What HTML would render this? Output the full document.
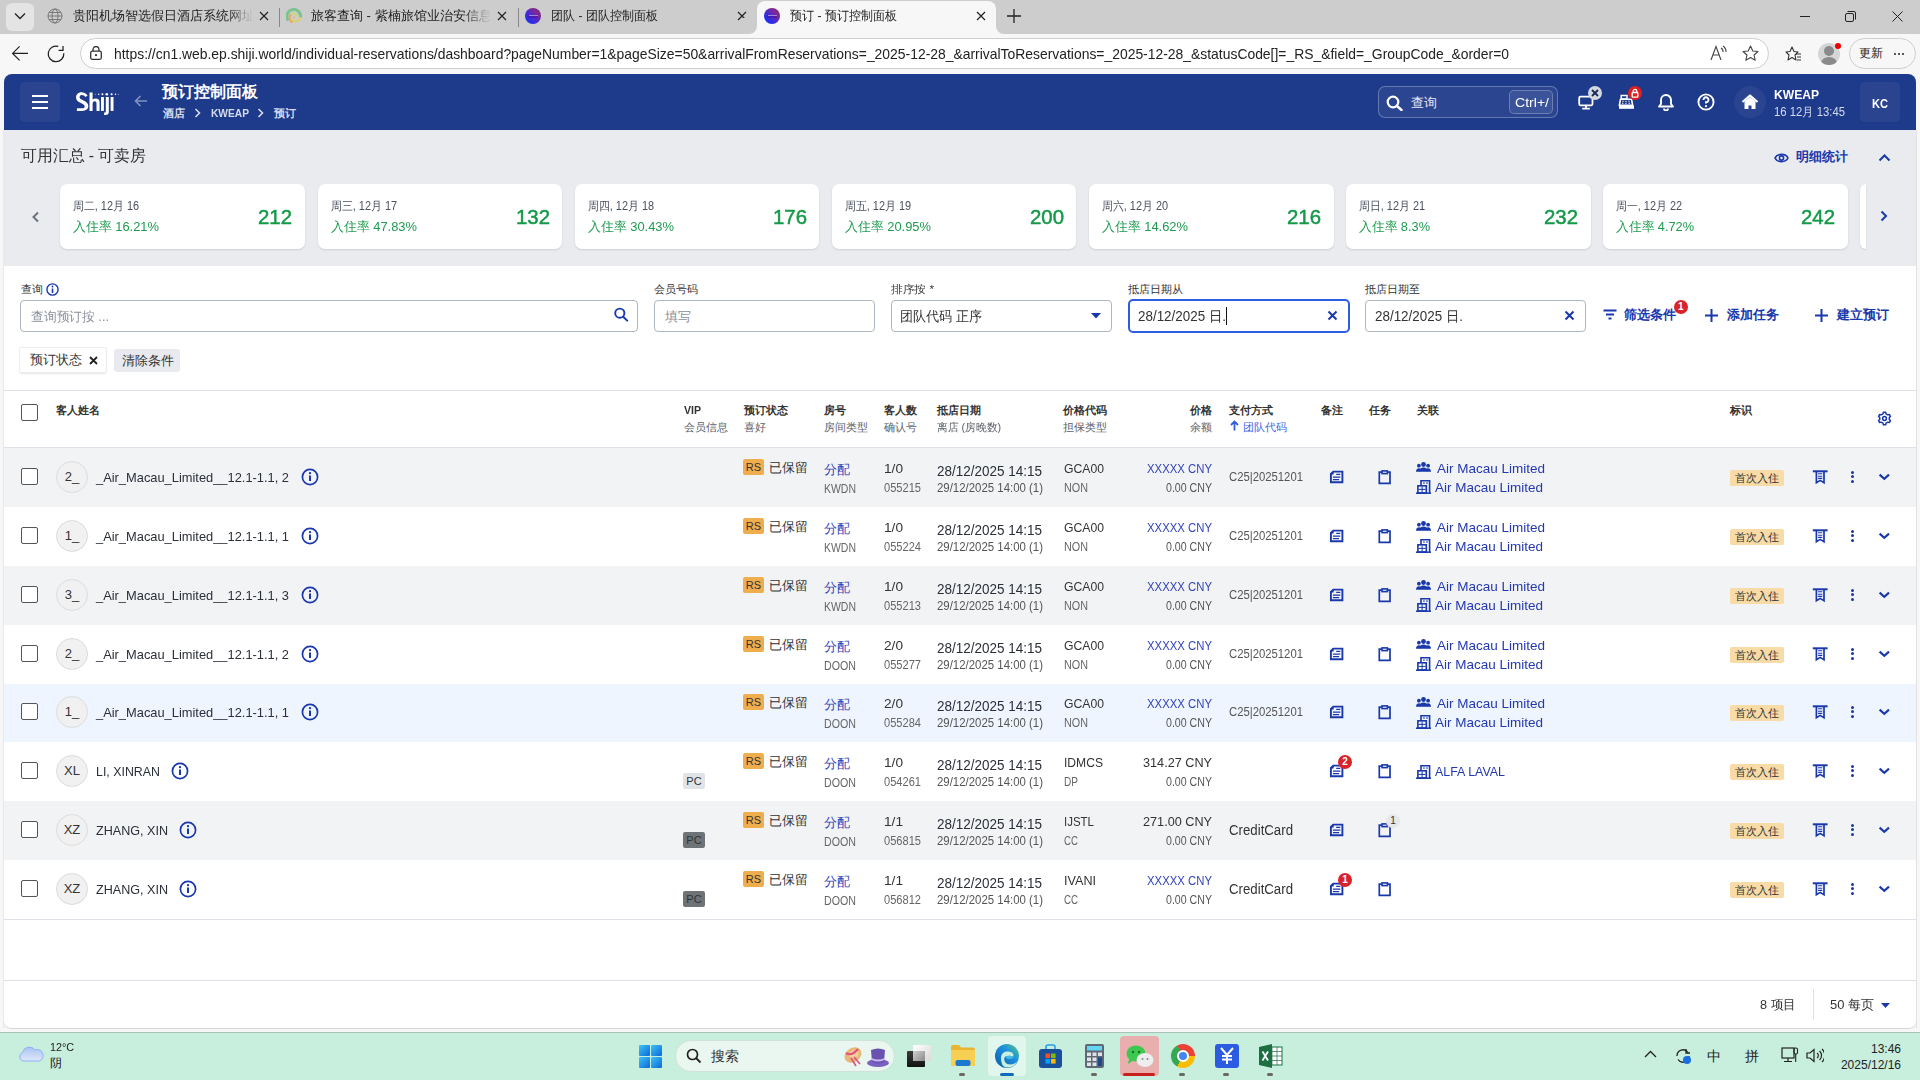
<!DOCTYPE html><html><head><meta charset="utf-8"><style>
html,body{margin:0;padding:0;width:1920px;height:1080px;overflow:hidden;background:#f7f7f7;font-family:"Liberation Sans", sans-serif;}
.t{position:absolute;white-space:nowrap;}
.r{position:absolute;}
</style></head><body>
<div class="r" style="left:0px;top:0px;width:1920px;height:34px;background:#cdcdcd;"></div>
<div class="r" style="left:6px;top:3px;width:28px;height:28px;background:#e4e4e4;border-radius:6px"></div>
<svg class="r" style="left:14px;top:12px;" width="12" height="8" viewBox="0 0 12 8"><path d="M1 1.5 L6 6.5 L11 1.5" fill="none" stroke="#222" stroke-width="1.3"/></svg>
<svg class="r" style="left:47px;top:8px;" width="16" height="16" viewBox="0 0 16 16"><circle cx="8" cy="8" r="7" fill="none" stroke="#777" stroke-width="1"/><ellipse cx="8" cy="8" rx="3" ry="7" fill="none" stroke="#777" stroke-width="1"/><path d="M1 8H15M2 4.5H14M2 11.5H14" stroke="#777" stroke-width="1"/></svg>
<div class="t" style="left:73px;top:9px;font-size:13px;line-height:13px;color:#222;font-weight:normal;width:180px;overflow:hidden;-webkit-mask-image:linear-gradient(90deg,#000 85%,transparent)">贵阳机场智选假日酒店系统网址导</div>
<svg class="r" style="left:259px;top:11px;" width="10" height="10" viewBox="0 0 10 10"><path d="M1 1L9 9M9 1L1 9" stroke="#222" stroke-width="1.2"/></svg>
<div class="r" style="left:279px;top:8px;width:1px;height:19px;background:#888;"></div>
<svg class="r" style="left:286px;top:8px;" width="16" height="16" viewBox="0 0 16 16"><path d="M2.5 12.5A6.8 6.8 0 1 1 14.5 9.5" fill="none" stroke="#7cc48e" stroke-width="3"/><path d="M14.5 9.5A5.5 5.5 0 0 1 6 12" fill="none" stroke="#d8d070" stroke-width="2.4"/><path d="M6.5 14.5A5 5 0 0 1 5 6.5" fill="none" stroke="#e8a860" stroke-width="2.2"/><path d="M5 6.5A4.5 4.5 0 0 1 12 9" fill="none" stroke="#c8d878" stroke-width="2"/><circle cx="8" cy="9.5" r="1" fill="#e8b070"/></svg>
<div class="t" style="left:311px;top:9px;font-size:13px;line-height:13px;color:#222;font-weight:normal;width:180px;overflow:hidden;-webkit-mask-image:linear-gradient(90deg,#000 85%,transparent)">旅客查询 - 紫楠旅馆业治安信息管</div>
<svg class="r" style="left:497px;top:11px;" width="10" height="10" viewBox="0 0 10 10"><path d="M1 1L9 9M9 1L1 9" stroke="#222" stroke-width="1.2"/></svg>
<div class="r" style="left:518px;top:8px;width:1px;height:19px;background:#888;"></div>
<div class="r" style="left:525px;top:8px;width:16px;height:16px;border-radius:50%;background:linear-gradient(45deg,#0a30ff 5%,#4a2ad0 45%,#84288c 75%,#6a2070)"></div>
<div class="r" style="left:528px;top:14.5px;width:10px;height:3px;background:rgba(60,10,120,0.35);"></div>
<div class="r" style="left:528.5px;top:15.4px;width:9px;height:1px;background:rgba(220,200,255,0.6);"></div>
<div class="t" style="left:551px;top:9px;font-size:13px;line-height:13px;color:#222;font-weight:normal;transform:scaleX(0.9259);transform-origin:0 0;">团队 - 团队控制面板</div>
<svg class="r" style="left:737px;top:11px;" width="10" height="10" viewBox="0 0 10 10"><path d="M1 1L9 9M9 1L1 9" stroke="#222" stroke-width="1.2"/></svg>
<div class="r" style="left:749px;top:26px;width:8px;height:8px;background:#f7f7f7;"></div>
<div class="r" style="left:741px;top:18px;width:16px;height:16px;background:#cdcdcd;border-radius:0 0 8px 0"></div>
<div class="r" style="left:996px;top:26px;width:8px;height:8px;background:#f7f7f7;"></div>
<div class="r" style="left:996px;top:18px;width:16px;height:16px;background:#cdcdcd;border-radius:0 0 0 8px"></div>
<div class="r" style="left:757px;top:1px;width:239px;height:34px;background:#f7f7f7;border-radius:8px 8px 0 0"></div>
<div class="r" style="left:764px;top:8px;width:16px;height:16px;border-radius:50%;background:linear-gradient(45deg,#0a30ff 5%,#4a2ad0 45%,#84288c 75%,#6a2070)"></div>
<div class="r" style="left:767px;top:14.5px;width:10px;height:3px;background:rgba(60,10,120,0.35);"></div>
<div class="r" style="left:767.5px;top:15.4px;width:9px;height:1px;background:rgba(220,200,255,0.6);"></div>
<div class="t" style="left:790px;top:9px;font-size:13px;line-height:13px;color:#222;font-weight:normal;transform:scaleX(0.9259);transform-origin:0 0;">预订 - 预订控制面板</div>
<svg class="r" style="left:976px;top:11px;" width="10" height="10" viewBox="0 0 10 10"><path d="M1 1L9 9M9 1L1 9" stroke="#222" stroke-width="1.2"/></svg>
<svg class="r" style="left:1007px;top:9px;" width="14" height="14" viewBox="0 0 14 14"><path d="M7 0V14M0 7H14" stroke="#222" stroke-width="1.3"/></svg>
<div class="r" style="left:1800px;top:16px;width:10px;height:1px;background:#222;"></div>
<svg class="r" style="left:1845px;top:11px;" width="11" height="11" viewBox="0 0 11 11"><rect x="0.5" y="2.5" width="8" height="8" rx="1.5" fill="none" stroke="#222" stroke-width="1"/><path d="M2.5 0.5H9A1.5 1.5 0 0 1 10.5 2V8.5" fill="none" stroke="#222" stroke-width="1"/></svg>
<svg class="r" style="left:1892px;top:11px;" width="11" height="11" viewBox="0 0 11 11"><path d="M0.5 0.5L10.5 10.5M10.5 0.5L0.5 10.5" stroke="#222" stroke-width="1"/></svg>
<svg class="r" style="left:11px;top:45px;" width="18" height="17" viewBox="0 0 18 17"><path d="M17 8.4H1.6M8.6 1.4L1.6 8.4L8.6 15.4" fill="none" stroke="#222" stroke-width="1.2"/></svg>
<svg class="r" style="left:46px;top:44px;" width="20" height="20" viewBox="0 0 20 20"><path d="M12.3 2.4A7.8 7.8 0 1 0 17.8 9.2" fill="none" stroke="#222" stroke-width="1.25"/><path d="M12.6 6.3H17V1.9" fill="none" stroke="#222" stroke-width="1.25"/></svg>
<div class="r" style="left:80px;top:38px;width:1687px;height:29px;background:#fff;border:1px solid #cfcfcf;border-radius:16px"></div>
<svg class="r" style="left:90px;top:46px;" width="12" height="14" viewBox="0 0 12 14"><rect x="0.7" y="5.2" width="10.6" height="8.1" rx="1.5" fill="none" stroke="#333" stroke-width="1.3"/><path d="M3 5V3.5A3 3 0 0 1 9 3.5V5" fill="none" stroke="#333" stroke-width="1.3"/><circle cx="6" cy="9.2" r="1.1" fill="#333"/></svg>
<div class="t" style="left:114px;top:46px;font-size:15px;line-height:15px;color:#222;font-weight:normal;transform:scaleX(0.9266);transform-origin:0 0;">https://cn1.web.ep.shiji.world/individual-reservations/dashboard?pageNumber=1&amp;pageSize=50&amp;arrivalFromReservations=_2025-12-28_&amp;arrivalToReservations=_2025-12-28_&amp;statusCode[]=_RS_&amp;field=_GroupCode_&amp;order=0</div>
<svg class="r" style="left:1710px;top:45px;" width="17" height="16" viewBox="0 0 17 16"><path d="M1 15L6 1.5L11 15M2.8 10H9.2" fill="none" stroke="#444" stroke-width="1.1"/><path d="M11 3A4 4 0 0 1 13 7M13 1A7 7 0 0 1 16 7" fill="none" stroke="#444" stroke-width="1.1"/></svg>
<svg class="r" style="left:1742px;top:45px;" width="17" height="16" viewBox="0 0 17 16"><path d="M8.5 1L10.8 6L16 6.5L12 10L13.2 15.2L8.5 12.5L3.8 15.2L5 10L1 6.5L6.2 6Z" fill="none" stroke="#444" stroke-width="1.1" stroke-linejoin="round"/></svg>
<svg class="r" style="left:1785px;top:46px;" width="17" height="16" viewBox="0 0 17 16"><path d="M7 1L9 5.5L13 6L10 9L11 14L7 11.5L3 14L4 9L1 6L5 5.5Z" fill="none" stroke="#333" stroke-width="1.1" stroke-linejoin="round"/><path d="M11 8H16M12 11H16M12 14H16" stroke="#333" stroke-width="1.1"/></svg>
<div class="r" style="left:1818px;top:43px;width:22px;height:22px;border-radius:50%;background:#d5d5d5;overflow:hidden"><div style="position:absolute;left:6px;top:3px;width:10px;height:10px;border-radius:50%;background:#8a8a8a"></div><div style="position:absolute;left:3px;top:14px;width:16px;height:12px;border-radius:50%;background:#8a8a8a"></div></div>
<div class="r" style="left:1835px;top:43px;width:6px;height:6px;border-radius:50%;background:#e00"></div>
<div class="r" style="left:1849px;top:38px;width:65px;height:29px;background:#f7f7f7;border:1px solid #cfcfcf;border-radius:16px"></div>
<div class="t" style="left:1859px;top:47px;font-size:12px;line-height:12px;color:#222;font-weight:normal;">更新</div>
<div class="r" style="left:1894px;top:53px;width:2px;height:2px;background:#222;border-radius:1px"></div>
<div class="r" style="left:1898px;top:53px;width:2px;height:2px;background:#222;border-radius:1px"></div>
<div class="r" style="left:1902px;top:53px;width:2px;height:2px;background:#222;border-radius:1px"></div>
<div class="r" style="left:4px;top:74px;width:1912px;height:954px;background:#fff;border-radius:8px 8px 7px 7px;box-shadow:0 1px 0 #d6d6d6"></div>
<div class="r" style="left:3px;top:130px;width:1px;height:898px;background:#e8e8e8;"></div>
<div class="r" style="left:1916px;top:130px;width:1px;height:898px;background:#e2e2e2;"></div>
<div class="r" style="left:4px;top:74px;width:1912px;height:56px;background:#1e3a8a;border-radius:8px 8px 0 0"></div>
<div class="r" style="left:20px;top:82px;width:40px;height:40px;background:rgba(255,255,255,0.055);border-radius:5px"></div>
<div class="r" style="left:32px;top:95px;width:16px;height:2px;background:#fff;"></div>
<div class="r" style="left:32px;top:101px;width:16px;height:2px;background:#fff;"></div>
<div class="r" style="left:32px;top:107px;width:16px;height:2px;background:#fff;"></div>
<svg class="r" style="left:70px;top:86px;" width="55" height="34" viewBox="0 0 55 34"><g fill="#fff"><path d="M17.6 9.6C16 7.2 13.5 6.3 11.5 6.3C8.2 6.3 6.1 8.4 6.1 11.4C6.1 14.6 8.6 15.9 11.4 17.3C13.4 18.3 14.7 19 14.7 20.4C14.7 21.7 13.6 22.2 12 22.2H6.9V24.9H12.3C16 24.9 18.3 23.2 18.3 20.1C18.3 16.9 15.9 15.6 13 14.2C11 13.2 9.6 12.6 9.6 11.2C9.6 9.8 10.6 9.1 11.9 9.1C13.4 9.1 14.6 9.9 15.4 11Z"/><path d="M19.5 6.4H22.6V13.6Q23.8 12.4 25.8 12.4Q29.6 12.4 29.6 16.4V24.9H26.5V17.2Q26.5 15.3 24.8 15.3Q22.6 15.3 22.6 17.6V24.9H19.5Z"/><rect x="31" y="11" width="2.9" height="13.9"/><path d="M35.8 11H38.8V26Q38.8 29 35.6 29H34.1V26.6H34.8Q35.8 26.6 35.8 25.4Z"/><rect x="40.6" y="11" width="2.9" height="13.9"/><circle cx="25.5" cy="8.2" r="0.45"/><circle cx="28.6" cy="8.2" r="0.75"/><circle cx="32.4" cy="8.2" r="1.05"/><circle cx="36.8" cy="8.2" r="1.3"/><circle cx="41.6" cy="8.2" r="1.05"/><circle cx="45.5" cy="8.2" r="0.75"/><circle cx="48.5" cy="8.2" r="0.45"/></g></svg>
<svg class="r" style="left:134px;top:95px;" width="14" height="12" viewBox="0 0 14 12"><path d="M13 6H1.5M6.5 1L1.5 6L6.5 11" fill="none" stroke="#8391c4" stroke-width="1.6"/></svg>
<div class="t" style="left:162px;top:84px;font-size:16px;line-height:16px;color:#fff;font-weight:bold;transform:scaleX(1.0000);transform-origin:0 0;">预订控制面板</div>
<div class="t" style="left:163px;top:108px;font-size:11px;line-height:11px;color:#d5dbef;font-weight:bold;">酒店</div>
<svg class="r" style="left:194px;top:108px;" width="7" height="10" viewBox="0 0 7 10"><path d="M1.5 1L5.5 5L1.5 9" fill="none" stroke="#d5dbef" stroke-width="1.6"/></svg>
<div class="t" style="left:211px;top:108px;font-size:11.5px;line-height:11.5px;color:#d5dbef;font-weight:bold;transform:scaleX(0.8876);transform-origin:0 0;">KWEAP</div>
<svg class="r" style="left:257px;top:108px;" width="7" height="10" viewBox="0 0 7 10"><path d="M1.5 1L5.5 5L1.5 9" fill="none" stroke="#d5dbef" stroke-width="1.6"/></svg>
<div class="t" style="left:274px;top:108px;font-size:11px;line-height:11px;color:#d5dbef;font-weight:bold;">预订</div>
<div class="r" style="left:1378px;top:86px;width:178px;height:30px;border:1px solid rgba(255,255,255,0.28);background:rgba(255,255,255,0.06);border-radius:7px"></div>
<svg class="r" style="left:1386px;top:95px;" width="18" height="16" viewBox="0 0 18 16"><circle cx="7" cy="7" r="5.3" fill="none" stroke="#fff" stroke-width="2.2"/><path d="M11 11L15.5 15" stroke="#fff" stroke-width="2.4" stroke-linecap="round"/></svg>
<div class="t" style="left:1411px;top:96px;font-size:13px;line-height:13px;color:#e6e9f5;font-weight:normal;">查询</div>
<div class="r" style="left:1509px;top:90px;width:42px;height:22px;border:1px solid rgba(255,255,255,0.25);background:rgba(255,255,255,0.08);border-radius:5px"></div>
<div class="t" style="left:1515px;top:96px;font-size:13px;line-height:13px;color:#fff;font-weight:normal;transform:scaleX(1.0820);transform-origin:0 0;">Ctrl+/</div>
<svg class="r" style="left:1578px;top:95px;" width="17" height="15" viewBox="0 0 17 15"><rect x="1.2" y="1.7" width="13.3" height="8.6" rx="1.2" fill="none" stroke="#fff" stroke-width="1.8"/><path d="M8 10.5V13.3M4.2 13.6H11.8" stroke="#fff" stroke-width="1.8"/></svg>
<div class="r" style="left:1588px;top:86px;width:14px;height:14px;border-radius:50%;background:#d4d8e2"></div>
<svg class="r" style="left:1591px;top:89px;" width="8" height="8" viewBox="0 0 8 8"><path d="M1 1L7 7M7 1L1 7" stroke="#1a2a55" stroke-width="1.8"/></svg>
<svg class="r" style="left:1618px;top:94px;" width="17" height="16" viewBox="0 0 17 16"><path d="M3.2 1.5H9V5H3.2Z" fill="none" stroke="#fff" stroke-width="1.5"/><path d="M2.5 5.2H13.5L14.6 11.2H1.4Z" fill="none" stroke="#fff" stroke-width="1.6"/><path d="M4.3 7.3H5.6M7.3 7.3H8.6M10.3 7.3H11.6M4 9.3H5.4M7.3 9.3H8.6M10.6 9.3H12" stroke="#fff" stroke-width="1.1"/><rect x="1" y="11.6" width="15" height="3.2" fill="#fff"/></svg>
<div class="r" style="left:1628px;top:86px;width:14px;height:14px;border-radius:50%;background:#e02020"></div>
<svg class="r" style="left:1631px;top:88px;" width="8" height="10" viewBox="0 0 8 10"><path d="M2.2 4.5V3.2A1.8 1.8 0 0 1 5.8 3.2V4.5" fill="none" stroke="#fff" stroke-width="1.3"/><rect x="1.2" y="4.5" width="5.6" height="4.6" rx="0.8" fill="none" stroke="#fff" stroke-width="1.4"/></svg>
<svg class="r" style="left:1657px;top:93px;" width="18" height="18" viewBox="0 0 18 18"><path d="M9 2A5 5 0 0 0 4 7V11L2 13.5H16L14 11V7A5 5 0 0 0 9 2Z" fill="none" stroke="#fff" stroke-width="1.9" stroke-linejoin="round"/><path d="M7 15.5A2 2 0 0 0 11 15.5" fill="none" stroke="#fff" stroke-width="1.9"/></svg>
<svg class="r" style="left:1697px;top:93px;" width="18" height="18" viewBox="0 0 18 18"><circle cx="9" cy="9" r="7.6" fill="none" stroke="#fff" stroke-width="1.9"/><path d="M6.5 7A2.5 2.5 0 1 1 9 9.3V10.5" fill="none" stroke="#fff" stroke-width="1.9"/><circle cx="9" cy="13.2" r="1.1" fill="#fff"/></svg>
<div class="r" style="left:1734px;top:86px;width:32px;height:32px;background:rgba(255,255,255,0.055);border-radius:50%"></div>
<svg class="r" style="left:1741px;top:94px;" width="18" height="16" viewBox="0 0 18 16"><path d="M1.5 8L9 1.5L16.5 8" fill="none" stroke="#fff" stroke-width="2.2" stroke-linejoin="round"/><path d="M3.5 7.5V15H7.5V11.5H10.5V15H14.5V7.5L9 3Z" fill="#fff"/></svg>
<div class="t" style="left:1774px;top:88px;font-size:13px;line-height:13px;color:#fff;font-weight:bold;transform:scaleX(0.9299);transform-origin:0 0;">KWEAP</div>
<div class="t" style="left:1774px;top:106px;font-size:12px;line-height:12px;color:#d5dbef;font-weight:normal;transform:scaleX(0.9416);transform-origin:0 0;">16 12月 13:45</div>
<div class="r" style="left:1860px;top:82px;width:40px;height:40px;background:rgba(255,255,255,0.055);border-radius:5px"></div>
<div class="t" style="left:1872px;top:97px;font-size:13px;line-height:13px;color:#fff;font-weight:bold;transform:scaleX(0.8519);transform-origin:0 0;">KC</div>
<div class="r" style="left:4px;top:130px;width:1912px;height:136px;background:#eaebef;"></div>
<div class="t" style="left:21px;top:148px;font-size:16px;line-height:16px;color:#333;font-weight:normal;transform:scaleX(0.9903);transform-origin:0 0;">可用汇总 - 可卖房</div>
<svg class="r" style="left:1774px;top:152px;" width="15" height="12" viewBox="0 0 15 12"><path d="M1 6C3.2 1.2 11.8 1.2 14 6C11.8 10.8 3.2 10.8 1 6Z" fill="none" stroke="#1838ac" stroke-width="1.6"/><circle cx="7.5" cy="6" r="2.1" fill="none" stroke="#1838ac" stroke-width="1.6"/></svg>
<div class="t" style="left:1796px;top:150px;font-size:13px;line-height:13px;color:#1838ac;font-weight:bold;">明细统计</div>
<svg class="r" style="left:1878px;top:153px;" width="13" height="9" viewBox="0 0 13 9"><path d="M1.5 7.5L6.5 2.5L11.5 7.5" fill="none" stroke="#1838ac" stroke-width="2"/></svg>
<svg class="r" style="left:31px;top:211px;" width="9" height="12" viewBox="0 0 9 12"><path d="M7 1.5L2.5 6L7 10.5" fill="none" stroke="#6b7280" stroke-width="2"/></svg>
<svg class="r" style="left:1879px;top:210px;" width="10" height="12" viewBox="0 0 10 12"><path d="M2.5 1.5L7 6L2.5 10.5" fill="none" stroke="#1838ac" stroke-width="2"/></svg>
<div class="r" style="left:60.4px;top:184px;width:244.5px;height:65px;background:#fff;border-radius:7px;box-shadow:0 1px 2px rgba(0,0,0,0.12)"></div>
<div class="t" style="left:73.4px;top:200px;font-size:12px;line-height:12px;color:#4b5060;font-weight:normal;transform:scaleX(0.9078);transform-origin:0 0;">周二, 12月 16</div>
<div class="t" style="left:73.4px;top:220px;font-size:13px;line-height:13px;color:#1f9a50;font-weight:normal;transform:scaleX(0.9919);transform-origin:0 0;">入住率 16.21%</div>
<div class="t" style="left:258.4px;top:206px;font-size:21px;line-height:21px;color:#139a48;font-weight:normal;transform:scaleX(0.9701);transform-origin:0 0;-webkit-text-stroke:0.5px #139a48">212</div>
<div class="r" style="left:317.57px;top:184px;width:244.5px;height:65px;background:#fff;border-radius:7px;box-shadow:0 1px 2px rgba(0,0,0,0.12)"></div>
<div class="t" style="left:330.57px;top:200px;font-size:12px;line-height:12px;color:#4b5060;font-weight:normal;transform:scaleX(0.9078);transform-origin:0 0;">周三, 12月 17</div>
<div class="t" style="left:330.57px;top:220px;font-size:13px;line-height:13px;color:#1f9a50;font-weight:normal;transform:scaleX(0.9919);transform-origin:0 0;">入住率 47.83%</div>
<div class="t" style="left:515.5699999999999px;top:206px;font-size:21px;line-height:21px;color:#139a48;font-weight:normal;transform:scaleX(0.9701);transform-origin:0 0;-webkit-text-stroke:0.5px #139a48">132</div>
<div class="r" style="left:574.74px;top:184px;width:244.5px;height:65px;background:#fff;border-radius:7px;box-shadow:0 1px 2px rgba(0,0,0,0.12)"></div>
<div class="t" style="left:587.74px;top:200px;font-size:12px;line-height:12px;color:#4b5060;font-weight:normal;transform:scaleX(0.9078);transform-origin:0 0;">周四, 12月 18</div>
<div class="t" style="left:587.74px;top:220px;font-size:13px;line-height:13px;color:#1f9a50;font-weight:normal;transform:scaleX(0.9919);transform-origin:0 0;">入住率 30.43%</div>
<div class="t" style="left:772.74px;top:206px;font-size:21px;line-height:21px;color:#139a48;font-weight:normal;transform:scaleX(0.9701);transform-origin:0 0;-webkit-text-stroke:0.5px #139a48">176</div>
<div class="r" style="left:831.91px;top:184px;width:244.5px;height:65px;background:#fff;border-radius:7px;box-shadow:0 1px 2px rgba(0,0,0,0.12)"></div>
<div class="t" style="left:844.91px;top:200px;font-size:12px;line-height:12px;color:#4b5060;font-weight:normal;transform:scaleX(0.9078);transform-origin:0 0;">周五, 12月 19</div>
<div class="t" style="left:844.91px;top:220px;font-size:13px;line-height:13px;color:#1f9a50;font-weight:normal;transform:scaleX(0.9919);transform-origin:0 0;">入住率 20.95%</div>
<div class="t" style="left:1029.9099999999999px;top:206px;font-size:21px;line-height:21px;color:#139a48;font-weight:normal;transform:scaleX(0.9701);transform-origin:0 0;-webkit-text-stroke:0.5px #139a48">200</div>
<div class="r" style="left:1089.08px;top:184px;width:244.5px;height:65px;background:#fff;border-radius:7px;box-shadow:0 1px 2px rgba(0,0,0,0.12)"></div>
<div class="t" style="left:1102.08px;top:200px;font-size:12px;line-height:12px;color:#4b5060;font-weight:normal;transform:scaleX(0.9078);transform-origin:0 0;">周六, 12月 20</div>
<div class="t" style="left:1102.08px;top:220px;font-size:13px;line-height:13px;color:#1f9a50;font-weight:normal;transform:scaleX(0.9919);transform-origin:0 0;">入住率 14.62%</div>
<div class="t" style="left:1287.08px;top:206px;font-size:21px;line-height:21px;color:#139a48;font-weight:normal;transform:scaleX(0.9701);transform-origin:0 0;-webkit-text-stroke:0.5px #139a48">216</div>
<div class="r" style="left:1346.25px;top:184px;width:244.5px;height:65px;background:#fff;border-radius:7px;box-shadow:0 1px 2px rgba(0,0,0,0.12)"></div>
<div class="t" style="left:1359.25px;top:200px;font-size:12px;line-height:12px;color:#4b5060;font-weight:normal;transform:scaleX(0.9078);transform-origin:0 0;">周日, 12月 21</div>
<div class="t" style="left:1359.25px;top:220px;font-size:13px;line-height:13px;color:#1f9a50;font-weight:normal;transform:scaleX(0.9827);transform-origin:0 0;">入住率 8.3%</div>
<div class="t" style="left:1544.25px;top:206px;font-size:21px;line-height:21px;color:#139a48;font-weight:normal;transform:scaleX(0.9701);transform-origin:0 0;-webkit-text-stroke:0.5px #139a48">232</div>
<div class="r" style="left:1603.42px;top:184px;width:244.5px;height:65px;background:#fff;border-radius:7px;box-shadow:0 1px 2px rgba(0,0,0,0.12)"></div>
<div class="t" style="left:1616.42px;top:200px;font-size:12px;line-height:12px;color:#4b5060;font-weight:normal;transform:scaleX(0.9078);transform-origin:0 0;">周一, 12月 22</div>
<div class="t" style="left:1616.42px;top:220px;font-size:13px;line-height:13px;color:#1f9a50;font-weight:normal;transform:scaleX(0.9813);transform-origin:0 0;">入住率 4.72%</div>
<div class="t" style="left:1801.42px;top:206px;font-size:21px;line-height:21px;color:#139a48;font-weight:normal;transform:scaleX(0.9701);transform-origin:0 0;-webkit-text-stroke:0.5px #139a48">242</div>
<div class="r" style="left:1860px;top:184px;width:6px;height:65px;background:#fff;border-radius:7px 0 0 7px;box-shadow:0 1px 2px rgba(0,0,0,0.12)"></div>
<div class="t" style="left:21px;top:284px;font-size:11px;line-height:11px;color:#333;font-weight:normal;">查询</div>
<svg class="r" style="left:46px;top:283px;" width="13" height="13" viewBox="0 0 13 13"><circle cx="6.5" cy="6.5" r="5.6" fill="none" stroke="#1838ac" stroke-width="1.4"/><path d="M6.5 5.5V10" stroke="#1838ac" stroke-width="1.6"/><circle cx="6.5" cy="3.5" r="0.9" fill="#1838ac"/></svg>
<div class="r" style="left:20px;top:300px;width:616px;height:30px;border:1px solid #aeb5c3;border-radius:4px"></div>
<div class="t" style="left:31px;top:310px;font-size:13px;line-height:13px;color:#8a8f99;font-weight:normal;transform:scaleX(0.9817);transform-origin:0 0;">查询预订按 ...</div>
<svg class="r" style="left:612px;top:306px;" width="17" height="17" viewBox="0 0 17 17"><circle cx="7.8" cy="7.2" r="4.6" fill="none" stroke="#1838ac" stroke-width="1.9"/><path d="M11.2 10.8L15.2 14.6" stroke="#1838ac" stroke-width="2" stroke-linecap="round"/></svg>
<div class="t" style="left:654px;top:284px;font-size:11px;line-height:11px;color:#333;font-weight:normal;">会员号码</div>
<div class="r" style="left:654px;top:300px;width:219px;height:30px;border:1px solid #aeb5c3;border-radius:4px"></div>
<div class="t" style="left:665px;top:310px;font-size:13px;line-height:13px;color:#8a8f99;font-weight:normal;">填写</div>
<div class="t" style="left:891px;top:284px;font-size:11px;line-height:11px;color:#333;font-weight:normal;transform:scaleX(1.0658);transform-origin:0 0;">排序按 *</div>
<div class="r" style="left:891px;top:300px;width:219px;height:30px;border:1px solid #aeb5c3;border-radius:4px"></div>
<div class="t" style="left:900px;top:309px;font-size:14px;line-height:14px;color:#333;font-weight:normal;transform:scaleX(0.9330);transform-origin:0 0;">团队代码 正序</div>
<svg class="r" style="left:1091px;top:313px;" width="10" height="6" viewBox="0 0 10 6"><path d="M0 0H10L5 5.5Z" fill="#1838ac"/></svg>
<div class="t" style="left:1128px;top:284px;font-size:11px;line-height:11px;color:#333;font-weight:normal;">抵店日期从</div>
<div class="r" style="left:1128px;top:299px;width:218px;height:30px;border:2px solid #2f5fe0;border-radius:5px"></div>
<div class="t" style="left:1138px;top:309px;font-size:14px;line-height:14px;color:#333;font-weight:normal;transform:scaleX(0.9580);transform-origin:0 0;">28/12/2025 日.</div>
<div class="r" style="left:1226px;top:307px;width:1px;height:18px;background:#111;"></div>
<svg class="r" style="left:1327px;top:310px;" width="11" height="11" viewBox="0 0 11 11"><path d="M1.5 1.5L9.5 9.5M9.5 1.5L1.5 9.5" stroke="#1838ac" stroke-width="2"/></svg>
<div class="t" style="left:1365px;top:284px;font-size:11px;line-height:11px;color:#333;font-weight:normal;">抵店日期至</div>
<div class="r" style="left:1365px;top:300px;width:219px;height:30px;border:1px solid #aeb5c3;border-radius:4px"></div>
<div class="t" style="left:1375px;top:309px;font-size:14px;line-height:14px;color:#333;font-weight:normal;transform:scaleX(0.9580);transform-origin:0 0;">28/12/2025 日.</div>
<svg class="r" style="left:1564px;top:310px;" width="11" height="11" viewBox="0 0 11 11"><path d="M1.5 1.5L9.5 9.5M9.5 1.5L1.5 9.5" stroke="#1838ac" stroke-width="2"/></svg>
<svg class="r" style="left:1603px;top:309px;" width="14" height="12" viewBox="0 0 14 12"><path d="M0.5 1.5H13.5M3 5.5H11M5.5 9.5H8.5" stroke="#1838ac" stroke-width="1.8"/></svg>
<div class="t" style="left:1624px;top:308px;font-size:13px;line-height:13px;color:#1838ac;font-weight:bold;">筛选条件</div>
<div class="r" style="left:1674px;top:300px;width:14px;height:14px;border-radius:50%;background:#d8232a"></div>
<div class="t" style="left:1678px;top:302px;font-size:10px;line-height:10px;color:#fff;font-weight:bold;">1</div>
<svg class="r" style="left:1705px;top:309px;" width="13" height="13" viewBox="0 0 13 13"><path d="M6.5 0V13M0 6.5H13" stroke="#1838ac" stroke-width="2"/></svg>
<div class="t" style="left:1727px;top:308px;font-size:13px;line-height:13px;color:#1838ac;font-weight:bold;">添加任务</div>
<svg class="r" style="left:1815px;top:309px;" width="13" height="13" viewBox="0 0 13 13"><path d="M6.5 0V13M0 6.5H13" stroke="#1838ac" stroke-width="2"/></svg>
<div class="t" style="left:1837px;top:308px;font-size:13px;line-height:13px;color:#1838ac;font-weight:bold;">建立预订</div>
<div class="r" style="left:20px;top:348px;width:86px;height:24px;background:#fff;border-radius:1px;box-shadow:0 0 0 1px #ececec,0 2px 2px rgba(0,0,0,0.10)"></div>
<div class="t" style="left:30px;top:353px;font-size:13px;line-height:13px;color:#333;font-weight:normal;">预订状态</div>
<svg class="r" style="left:89px;top:356px;" width="9" height="9" viewBox="0 0 9 9"><path d="M1 1L8 8M8 1L1 8" stroke="#222" stroke-width="1.8"/></svg>
<div class="r" style="left:114px;top:349px;width:66px;height:23px;background:#e9eaef;border-radius:3px"></div>
<div class="t" style="left:122px;top:354px;font-size:13px;line-height:13px;color:#333;font-weight:normal;">清除条件</div>
<div class="r" style="left:4px;top:390px;width:1912px;height:1px;background:#dde0e6;"></div>
<div class="r" style="left:21px;top:404px;width:15px;height:15px;border:1.5px solid #555;border-radius:2px;background:#fff"></div>
<div class="t" style="left:56px;top:405px;font-size:11px;line-height:11px;color:#333;font-weight:bold;">客人姓名</div>
<div class="t" style="left:684px;top:405px;font-size:11px;line-height:11px;color:#333;font-weight:bold;transform:scaleX(0.9586);transform-origin:0 0;">VIP</div>
<div class="t" style="left:684px;top:422px;font-size:11px;line-height:11px;color:#5c6168;font-weight:normal;">会员信息</div>
<div class="t" style="left:744px;top:405px;font-size:11px;line-height:11px;color:#333;font-weight:bold;">预订状态</div>
<div class="t" style="left:744px;top:422px;font-size:11px;line-height:11px;color:#5c6168;font-weight:normal;">喜好</div>
<div class="t" style="left:824px;top:405px;font-size:11px;line-height:11px;color:#333;font-weight:bold;">房号</div>
<div class="t" style="left:824px;top:422px;font-size:11px;line-height:11px;color:#5c6168;font-weight:normal;">房间类型</div>
<div class="t" style="left:884px;top:405px;font-size:11px;line-height:11px;color:#333;font-weight:bold;">客人数</div>
<div class="t" style="left:884px;top:422px;font-size:11px;line-height:11px;color:#5c6168;font-weight:normal;">确认号</div>
<div class="t" style="left:937px;top:405px;font-size:11px;line-height:11px;color:#333;font-weight:bold;">抵店日期</div>
<div class="t" style="left:937px;top:422px;font-size:11px;line-height:11px;color:#5c6168;font-weight:normal;transform:scaleX(0.9787);transform-origin:0 0;">离店 (房晚数)</div>
<div class="t" style="left:1063px;top:405px;font-size:11px;line-height:11px;color:#333;font-weight:bold;">价格代码</div>
<div class="t" style="left:1063px;top:422px;font-size:11px;line-height:11px;color:#5c6168;font-weight:normal;">担保类型</div>
<div class="t" style="left:1190px;top:405px;font-size:11px;line-height:11px;color:#333;font-weight:bold;transform:scaleX(1.0000);transform-origin:0 0;">价格</div>
<div class="t" style="left:1190px;top:422px;font-size:11px;line-height:11px;color:#5c6168;font-weight:normal;transform:scaleX(1.0000);transform-origin:0 0;">余额</div>
<div class="t" style="left:1229px;top:405px;font-size:11px;line-height:11px;color:#333;font-weight:bold;">支付方式</div>
<svg class="r" style="left:1230px;top:420px;" width="9" height="11" viewBox="0 0 9 11"><path d="M4.5 10.5V2M1 5L4.5 1.5L8 5" fill="none" stroke="#2f5fe0" stroke-width="1.8"/></svg>
<div class="t" style="left:1243px;top:422px;font-size:11px;line-height:11px;color:#3f63e6;font-weight:normal;">团队代码</div>
<div class="t" style="left:1321px;top:405px;font-size:11px;line-height:11px;color:#333;font-weight:bold;">备注</div>
<div class="t" style="left:1369px;top:405px;font-size:11px;line-height:11px;color:#333;font-weight:bold;">任务</div>
<div class="t" style="left:1417px;top:405px;font-size:11px;line-height:11px;color:#333;font-weight:bold;">关联</div>
<div class="t" style="left:1730px;top:405px;font-size:11px;line-height:11px;color:#333;font-weight:bold;">标识</div>
<svg class="r" style="left:1877px;top:410.5px;" width="15" height="15" viewBox="0 0 15 15"><path d="M6.38 1.30L8.62 1.30L9.01 2.84L10.78 3.86L12.31 3.43L13.43 5.37L12.29 6.48L12.29 8.52L13.43 9.63L12.31 11.57L10.78 11.14L9.01 12.16L8.62 13.70L6.38 13.70L5.99 12.16L4.22 11.14L2.69 11.57L1.57 9.63L2.71 8.52L2.71 6.48L1.57 5.37L2.69 3.43L4.22 3.86L5.99 2.84Z" fill="none" stroke="#1838ac" stroke-width="1.5" stroke-linejoin="round"/><circle cx="7.5" cy="7.5" r="1.9" fill="none" stroke="#1838ac" stroke-width="1.5"/></svg>
<div class="r" style="left:4px;top:447px;width:1912px;height:1px;background:#dde0e6;"></div>
<div class="r" style="left:4px;top:448.0px;width:1912px;height:58.875px;background:#f2f3f5;"></div>
<div class="r" style="left:21px;top:468px;width:15px;height:15px;border:1.5px solid #555;border-radius:2px;background:#fff"></div>
<div class="r" style="left:56px;top:461px;width:30px;height:30px;border-radius:50%;border:1px solid #dcdcdc;background:#f1f1f1;color:#333;font-size:13px;line-height:30px;text-align:center">2_</div>
<div class="t" style="left:96px;top:471px;font-size:13px;line-height:13px;color:#2b2f38;font-weight:normal;transform:scaleX(0.9891);transform-origin:0 0;">_Air_Macau_Limited__12.1-1.1, 2</div>
<svg class="r" style="left:301px;top:468px;" width="18" height="18" viewBox="0 0 18 18"><circle cx="9" cy="9" r="7.6" fill="none" stroke="#1838ac" stroke-width="1.7"/><path d="M9 7.6V13" stroke="#1838ac" stroke-width="2"/><circle cx="9" cy="5.2" r="1.15" fill="#1838ac"/></svg>
<div class="r" style="left:743px;top:459px;width:21px;height:16px;border-radius:2px;background:#f0ad4e;color:#333;font-size:11px;line-height:16px;text-align:center">RS</div>
<div class="t" style="left:769px;top:461px;font-size:13px;line-height:13px;color:#333;font-weight:normal;">已保留</div>
<div class="t" style="left:824px;top:463px;font-size:13px;line-height:13px;color:#3344bb;font-weight:normal;">分配</div>
<div class="t" style="left:824px;top:483px;font-size:12px;line-height:12px;color:#666;font-weight:normal;transform:scaleX(0.8726);transform-origin:0 0;">KWDN</div>
<div class="t" style="left:884px;top:462px;font-size:13px;line-height:13px;color:#333;font-weight:normal;transform:scaleX(1.0510);transform-origin:0 0;">1/0</div>
<div class="t" style="left:884px;top:482px;font-size:12px;line-height:12px;color:#666;font-weight:normal;transform:scaleX(0.9239);transform-origin:0 0;">055215</div>
<div class="t" style="left:937px;top:464px;font-size:14px;line-height:14px;color:#2b2f38;font-weight:normal;transform:scaleX(0.9633);transform-origin:0 0;">28/12/2025 14:15</div>
<div class="t" style="left:937px;top:482px;font-size:12px;line-height:12px;color:#555;font-weight:normal;transform:scaleX(0.9513);transform-origin:0 0;">29/12/2025 14:00 (1)</div>
<div class="t" style="left:1064px;top:462px;font-size:13px;line-height:13px;color:#333;font-weight:normal;transform:scaleX(0.9381);transform-origin:0 0;">GCA00</div>
<div class="t" style="left:1064px;top:482px;font-size:12px;line-height:12px;color:#666;font-weight:normal;transform:scaleX(0.8998);transform-origin:0 0;">NON</div>
<div class="t" style="left:1147px;top:462px;font-size:13px;line-height:13px;color:#3344bb;font-weight:normal;transform:scaleX(0.8734);transform-origin:0 0;">XXXXX CNY</div>
<div class="t" style="left:1166px;top:482px;font-size:12px;line-height:12px;color:#555;font-weight:normal;transform:scaleX(0.8841);transform-origin:0 0;">0.00 CNY</div>
<div class="t" style="left:1229px;top:471px;font-size:12px;line-height:12px;color:#555;font-weight:normal;transform:scaleX(0.9423);transform-origin:0 0;">C25|20251201</div>
<svg class="r" style="left:1329px;top:470px;" width="15" height="15" viewBox="0 0 15 15"><path d="M4.3 1.6H13.4V12.2H1.9V4Z" fill="none" stroke="#1838ac" stroke-width="1.9" stroke-linejoin="miter"/><path d="M1.2 4.4L4.6 1V4.4Z" fill="#1838ac"/><path d="M7.2 4.4H11.3M3.9 7.2H11.3M3.9 9.6H10.1" stroke="#1838ac" stroke-width="1.3"/></svg>
<svg class="r" style="left:1378px;top:469.5px;" width="14" height="15" viewBox="0 0 14 15"><path d="M3.8 2.2H1.3V13.4H12V2.2H9.6" fill="none" stroke="#1838ac" stroke-width="1.7"/><rect x="4" y="0.9" width="5.4" height="2.7" fill="none" stroke="#1838ac" stroke-width="1.6"/></svg>
<svg class="r" style="left:1416px;top:462.2px;" width="15" height="11" viewBox="0 0 15 11"><g fill="#1838ac"><circle cx="2.9" cy="3.7" r="1.9"/><path d="M0 9.8C0 7.4 1.1 6.2 3 6.2C3.8 6.2 4.4 6.4 4.9 6.8L4 9.8Z"/><circle cx="12.1" cy="3.7" r="1.9"/><path d="M15 9.8C15 7.4 13.9 6.2 12 6.2C11.2 6.2 10.6 6.4 10.1 6.8L11 9.8Z"/><circle cx="7.5" cy="2.5" r="2.4"/><path d="M3.4 9.8C3.4 6.8 5.1 5.4 7.5 5.4C9.9 5.4 11.6 6.8 11.6 9.8Z"/></g></svg>
<div class="t" style="left:1437px;top:462px;font-size:13px;line-height:13px;color:#2438b0;font-weight:normal;transform:scaleX(1.0380);transform-origin:0 0;">Air Macau Limited</div>
<svg class="r" style="left:1416px;top:480px;" width="15" height="14" viewBox="0 0 15 14"><path d="M5 5.2V0.8H13.6V13" fill="none" stroke="#1838ac" stroke-width="1.6"/><rect x="7.2" y="2.4" width="1.5" height="1.3" fill="#1838ac"/><rect x="10.2" y="2.4" width="1.5" height="1.3" fill="#1838ac"/><rect x="1.9" y="5.8" width="8.4" height="7.2" fill="none" stroke="#1838ac" stroke-width="1.6"/><path d="M6.1 6.6V12.5M2.6 9.4H9.6" stroke="#1838ac" stroke-width="1"/><path d="M0 13.2H15" stroke="#1838ac" stroke-width="1.5"/></svg>
<div class="t" style="left:1435px;top:481px;font-size:13px;line-height:13px;color:#2438b0;font-weight:normal;transform:scaleX(1.0380);transform-origin:0 0;">Air Macau Limited</div>
<div class="r" style="left:1730px;top:470px;width:54px;height:16px;border-radius:2px;background:#f8dba6;color:#333;font-size:11px;line-height:16px;text-align:center">首次入住</div>
<svg class="r" style="left:1812px;top:469px;" width="16" height="16" viewBox="0 0 16 16"><path d="M0.8 2.3H15.6" stroke="#1838ac" stroke-width="2"/><path d="M4.4 2.5V13.8L8.2 11.4L12 13.8V2.5" fill="none" stroke="#1838ac" stroke-width="1.7"/><path d="M6.1 4.7H10.3M6.1 7.2H10.3M6.1 9.4H10.3" stroke="#1838ac" stroke-width="1.1"/></svg>
<div class="r" style="left:1851px;top:470.6px;width:3.2px;height:3.2px;background:#1838ac;border-radius:50%"></div>
<div class="r" style="left:1851px;top:475.3px;width:3.2px;height:3.2px;background:#1838ac;border-radius:50%"></div>
<div class="r" style="left:1851px;top:480.0px;width:3.2px;height:3.2px;background:#1838ac;border-radius:50%"></div>
<svg class="r" style="left:1878px;top:473px;" width="13" height="8" viewBox="0 0 13 8"><path d="M1.6 1.6L6.3 5.8L11 1.6" fill="none" stroke="#1838ac" stroke-width="2.1"/></svg>
<div class="r" style="left:4px;top:506.875px;width:1912px;height:58.875px;background:#ffffff;"></div>
<div class="r" style="left:21px;top:527px;width:15px;height:15px;border:1.5px solid #555;border-radius:2px;background:#fff"></div>
<div class="r" style="left:56px;top:520px;width:30px;height:30px;border-radius:50%;border:1px solid #dcdcdc;background:#f1f1f1;color:#333;font-size:13px;line-height:30px;text-align:center">1_</div>
<div class="t" style="left:96px;top:530px;font-size:13px;line-height:13px;color:#2b2f38;font-weight:normal;transform:scaleX(0.9891);transform-origin:0 0;">_Air_Macau_Limited__12.1-1.1, 1</div>
<svg class="r" style="left:301px;top:527px;" width="18" height="18" viewBox="0 0 18 18"><circle cx="9" cy="9" r="7.6" fill="none" stroke="#1838ac" stroke-width="1.7"/><path d="M9 7.6V13" stroke="#1838ac" stroke-width="2"/><circle cx="9" cy="5.2" r="1.15" fill="#1838ac"/></svg>
<div class="r" style="left:743px;top:518px;width:21px;height:16px;border-radius:2px;background:#f0ad4e;color:#333;font-size:11px;line-height:16px;text-align:center">RS</div>
<div class="t" style="left:769px;top:520px;font-size:13px;line-height:13px;color:#333;font-weight:normal;">已保留</div>
<div class="t" style="left:824px;top:522px;font-size:13px;line-height:13px;color:#3344bb;font-weight:normal;">分配</div>
<div class="t" style="left:824px;top:542px;font-size:12px;line-height:12px;color:#666;font-weight:normal;transform:scaleX(0.8726);transform-origin:0 0;">KWDN</div>
<div class="t" style="left:884px;top:521px;font-size:13px;line-height:13px;color:#333;font-weight:normal;transform:scaleX(1.0510);transform-origin:0 0;">1/0</div>
<div class="t" style="left:884px;top:541px;font-size:12px;line-height:12px;color:#666;font-weight:normal;transform:scaleX(0.9239);transform-origin:0 0;">055224</div>
<div class="t" style="left:937px;top:523px;font-size:14px;line-height:14px;color:#2b2f38;font-weight:normal;transform:scaleX(0.9633);transform-origin:0 0;">28/12/2025 14:15</div>
<div class="t" style="left:937px;top:541px;font-size:12px;line-height:12px;color:#555;font-weight:normal;transform:scaleX(0.9513);transform-origin:0 0;">29/12/2025 14:00 (1)</div>
<div class="t" style="left:1064px;top:521px;font-size:13px;line-height:13px;color:#333;font-weight:normal;transform:scaleX(0.9381);transform-origin:0 0;">GCA00</div>
<div class="t" style="left:1064px;top:541px;font-size:12px;line-height:12px;color:#666;font-weight:normal;transform:scaleX(0.8998);transform-origin:0 0;">NON</div>
<div class="t" style="left:1147px;top:521px;font-size:13px;line-height:13px;color:#3344bb;font-weight:normal;transform:scaleX(0.8734);transform-origin:0 0;">XXXXX CNY</div>
<div class="t" style="left:1166px;top:541px;font-size:12px;line-height:12px;color:#555;font-weight:normal;transform:scaleX(0.8841);transform-origin:0 0;">0.00 CNY</div>
<div class="t" style="left:1229px;top:530px;font-size:12px;line-height:12px;color:#555;font-weight:normal;transform:scaleX(0.9423);transform-origin:0 0;">C25|20251201</div>
<svg class="r" style="left:1329px;top:529px;" width="15" height="15" viewBox="0 0 15 15"><path d="M4.3 1.6H13.4V12.2H1.9V4Z" fill="none" stroke="#1838ac" stroke-width="1.9" stroke-linejoin="miter"/><path d="M1.2 4.4L4.6 1V4.4Z" fill="#1838ac"/><path d="M7.2 4.4H11.3M3.9 7.2H11.3M3.9 9.6H10.1" stroke="#1838ac" stroke-width="1.3"/></svg>
<svg class="r" style="left:1378px;top:528.5px;" width="14" height="15" viewBox="0 0 14 15"><path d="M3.8 2.2H1.3V13.4H12V2.2H9.6" fill="none" stroke="#1838ac" stroke-width="1.7"/><rect x="4" y="0.9" width="5.4" height="2.7" fill="none" stroke="#1838ac" stroke-width="1.6"/></svg>
<svg class="r" style="left:1416px;top:521.2px;" width="15" height="11" viewBox="0 0 15 11"><g fill="#1838ac"><circle cx="2.9" cy="3.7" r="1.9"/><path d="M0 9.8C0 7.4 1.1 6.2 3 6.2C3.8 6.2 4.4 6.4 4.9 6.8L4 9.8Z"/><circle cx="12.1" cy="3.7" r="1.9"/><path d="M15 9.8C15 7.4 13.9 6.2 12 6.2C11.2 6.2 10.6 6.4 10.1 6.8L11 9.8Z"/><circle cx="7.5" cy="2.5" r="2.4"/><path d="M3.4 9.8C3.4 6.8 5.1 5.4 7.5 5.4C9.9 5.4 11.6 6.8 11.6 9.8Z"/></g></svg>
<div class="t" style="left:1437px;top:521px;font-size:13px;line-height:13px;color:#2438b0;font-weight:normal;transform:scaleX(1.0380);transform-origin:0 0;">Air Macau Limited</div>
<svg class="r" style="left:1416px;top:539px;" width="15" height="14" viewBox="0 0 15 14"><path d="M5 5.2V0.8H13.6V13" fill="none" stroke="#1838ac" stroke-width="1.6"/><rect x="7.2" y="2.4" width="1.5" height="1.3" fill="#1838ac"/><rect x="10.2" y="2.4" width="1.5" height="1.3" fill="#1838ac"/><rect x="1.9" y="5.8" width="8.4" height="7.2" fill="none" stroke="#1838ac" stroke-width="1.6"/><path d="M6.1 6.6V12.5M2.6 9.4H9.6" stroke="#1838ac" stroke-width="1"/><path d="M0 13.2H15" stroke="#1838ac" stroke-width="1.5"/></svg>
<div class="t" style="left:1435px;top:540px;font-size:13px;line-height:13px;color:#2438b0;font-weight:normal;transform:scaleX(1.0380);transform-origin:0 0;">Air Macau Limited</div>
<div class="r" style="left:1730px;top:529px;width:54px;height:16px;border-radius:2px;background:#f8dba6;color:#333;font-size:11px;line-height:16px;text-align:center">首次入住</div>
<svg class="r" style="left:1812px;top:528px;" width="16" height="16" viewBox="0 0 16 16"><path d="M0.8 2.3H15.6" stroke="#1838ac" stroke-width="2"/><path d="M4.4 2.5V13.8L8.2 11.4L12 13.8V2.5" fill="none" stroke="#1838ac" stroke-width="1.7"/><path d="M6.1 4.7H10.3M6.1 7.2H10.3M6.1 9.4H10.3" stroke="#1838ac" stroke-width="1.1"/></svg>
<div class="r" style="left:1851px;top:529.6px;width:3.2px;height:3.2px;background:#1838ac;border-radius:50%"></div>
<div class="r" style="left:1851px;top:534.3000000000001px;width:3.2px;height:3.2px;background:#1838ac;border-radius:50%"></div>
<div class="r" style="left:1851px;top:539.0px;width:3.2px;height:3.2px;background:#1838ac;border-radius:50%"></div>
<svg class="r" style="left:1878px;top:532px;" width="13" height="8" viewBox="0 0 13 8"><path d="M1.6 1.6L6.3 5.8L11 1.6" fill="none" stroke="#1838ac" stroke-width="2.1"/></svg>
<div class="r" style="left:4px;top:565.75px;width:1912px;height:58.875px;background:#f2f3f5;"></div>
<div class="r" style="left:21px;top:586px;width:15px;height:15px;border:1.5px solid #555;border-radius:2px;background:#fff"></div>
<div class="r" style="left:56px;top:579px;width:30px;height:30px;border-radius:50%;border:1px solid #dcdcdc;background:#f1f1f1;color:#333;font-size:13px;line-height:30px;text-align:center">3_</div>
<div class="t" style="left:96px;top:589px;font-size:13px;line-height:13px;color:#2b2f38;font-weight:normal;transform:scaleX(0.9891);transform-origin:0 0;">_Air_Macau_Limited__12.1-1.1, 3</div>
<svg class="r" style="left:301px;top:586px;" width="18" height="18" viewBox="0 0 18 18"><circle cx="9" cy="9" r="7.6" fill="none" stroke="#1838ac" stroke-width="1.7"/><path d="M9 7.6V13" stroke="#1838ac" stroke-width="2"/><circle cx="9" cy="5.2" r="1.15" fill="#1838ac"/></svg>
<div class="r" style="left:743px;top:577px;width:21px;height:16px;border-radius:2px;background:#f0ad4e;color:#333;font-size:11px;line-height:16px;text-align:center">RS</div>
<div class="t" style="left:769px;top:579px;font-size:13px;line-height:13px;color:#333;font-weight:normal;">已保留</div>
<div class="t" style="left:824px;top:581px;font-size:13px;line-height:13px;color:#3344bb;font-weight:normal;">分配</div>
<div class="t" style="left:824px;top:601px;font-size:12px;line-height:12px;color:#666;font-weight:normal;transform:scaleX(0.8726);transform-origin:0 0;">KWDN</div>
<div class="t" style="left:884px;top:580px;font-size:13px;line-height:13px;color:#333;font-weight:normal;transform:scaleX(1.0510);transform-origin:0 0;">1/0</div>
<div class="t" style="left:884px;top:600px;font-size:12px;line-height:12px;color:#666;font-weight:normal;transform:scaleX(0.9239);transform-origin:0 0;">055213</div>
<div class="t" style="left:937px;top:582px;font-size:14px;line-height:14px;color:#2b2f38;font-weight:normal;transform:scaleX(0.9633);transform-origin:0 0;">28/12/2025 14:15</div>
<div class="t" style="left:937px;top:600px;font-size:12px;line-height:12px;color:#555;font-weight:normal;transform:scaleX(0.9513);transform-origin:0 0;">29/12/2025 14:00 (1)</div>
<div class="t" style="left:1064px;top:580px;font-size:13px;line-height:13px;color:#333;font-weight:normal;transform:scaleX(0.9381);transform-origin:0 0;">GCA00</div>
<div class="t" style="left:1064px;top:600px;font-size:12px;line-height:12px;color:#666;font-weight:normal;transform:scaleX(0.8998);transform-origin:0 0;">NON</div>
<div class="t" style="left:1147px;top:580px;font-size:13px;line-height:13px;color:#3344bb;font-weight:normal;transform:scaleX(0.8734);transform-origin:0 0;">XXXXX CNY</div>
<div class="t" style="left:1166px;top:600px;font-size:12px;line-height:12px;color:#555;font-weight:normal;transform:scaleX(0.8841);transform-origin:0 0;">0.00 CNY</div>
<div class="t" style="left:1229px;top:589px;font-size:12px;line-height:12px;color:#555;font-weight:normal;transform:scaleX(0.9423);transform-origin:0 0;">C25|20251201</div>
<svg class="r" style="left:1329px;top:588px;" width="15" height="15" viewBox="0 0 15 15"><path d="M4.3 1.6H13.4V12.2H1.9V4Z" fill="none" stroke="#1838ac" stroke-width="1.9" stroke-linejoin="miter"/><path d="M1.2 4.4L4.6 1V4.4Z" fill="#1838ac"/><path d="M7.2 4.4H11.3M3.9 7.2H11.3M3.9 9.6H10.1" stroke="#1838ac" stroke-width="1.3"/></svg>
<svg class="r" style="left:1378px;top:587.5px;" width="14" height="15" viewBox="0 0 14 15"><path d="M3.8 2.2H1.3V13.4H12V2.2H9.6" fill="none" stroke="#1838ac" stroke-width="1.7"/><rect x="4" y="0.9" width="5.4" height="2.7" fill="none" stroke="#1838ac" stroke-width="1.6"/></svg>
<svg class="r" style="left:1416px;top:580.2px;" width="15" height="11" viewBox="0 0 15 11"><g fill="#1838ac"><circle cx="2.9" cy="3.7" r="1.9"/><path d="M0 9.8C0 7.4 1.1 6.2 3 6.2C3.8 6.2 4.4 6.4 4.9 6.8L4 9.8Z"/><circle cx="12.1" cy="3.7" r="1.9"/><path d="M15 9.8C15 7.4 13.9 6.2 12 6.2C11.2 6.2 10.6 6.4 10.1 6.8L11 9.8Z"/><circle cx="7.5" cy="2.5" r="2.4"/><path d="M3.4 9.8C3.4 6.8 5.1 5.4 7.5 5.4C9.9 5.4 11.6 6.8 11.6 9.8Z"/></g></svg>
<div class="t" style="left:1437px;top:580px;font-size:13px;line-height:13px;color:#2438b0;font-weight:normal;transform:scaleX(1.0380);transform-origin:0 0;">Air Macau Limited</div>
<svg class="r" style="left:1416px;top:598px;" width="15" height="14" viewBox="0 0 15 14"><path d="M5 5.2V0.8H13.6V13" fill="none" stroke="#1838ac" stroke-width="1.6"/><rect x="7.2" y="2.4" width="1.5" height="1.3" fill="#1838ac"/><rect x="10.2" y="2.4" width="1.5" height="1.3" fill="#1838ac"/><rect x="1.9" y="5.8" width="8.4" height="7.2" fill="none" stroke="#1838ac" stroke-width="1.6"/><path d="M6.1 6.6V12.5M2.6 9.4H9.6" stroke="#1838ac" stroke-width="1"/><path d="M0 13.2H15" stroke="#1838ac" stroke-width="1.5"/></svg>
<div class="t" style="left:1435px;top:599px;font-size:13px;line-height:13px;color:#2438b0;font-weight:normal;transform:scaleX(1.0380);transform-origin:0 0;">Air Macau Limited</div>
<div class="r" style="left:1730px;top:588px;width:54px;height:16px;border-radius:2px;background:#f8dba6;color:#333;font-size:11px;line-height:16px;text-align:center">首次入住</div>
<svg class="r" style="left:1812px;top:587px;" width="16" height="16" viewBox="0 0 16 16"><path d="M0.8 2.3H15.6" stroke="#1838ac" stroke-width="2"/><path d="M4.4 2.5V13.8L8.2 11.4L12 13.8V2.5" fill="none" stroke="#1838ac" stroke-width="1.7"/><path d="M6.1 4.7H10.3M6.1 7.2H10.3M6.1 9.4H10.3" stroke="#1838ac" stroke-width="1.1"/></svg>
<div class="r" style="left:1851px;top:588.6px;width:3.2px;height:3.2px;background:#1838ac;border-radius:50%"></div>
<div class="r" style="left:1851px;top:593.3000000000001px;width:3.2px;height:3.2px;background:#1838ac;border-radius:50%"></div>
<div class="r" style="left:1851px;top:598.0px;width:3.2px;height:3.2px;background:#1838ac;border-radius:50%"></div>
<svg class="r" style="left:1878px;top:591px;" width="13" height="8" viewBox="0 0 13 8"><path d="M1.6 1.6L6.3 5.8L11 1.6" fill="none" stroke="#1838ac" stroke-width="2.1"/></svg>
<div class="r" style="left:4px;top:624.625px;width:1912px;height:58.875px;background:#ffffff;"></div>
<div class="r" style="left:21px;top:645px;width:15px;height:15px;border:1.5px solid #555;border-radius:2px;background:#fff"></div>
<div class="r" style="left:56px;top:638px;width:30px;height:30px;border-radius:50%;border:1px solid #dcdcdc;background:#f1f1f1;color:#333;font-size:13px;line-height:30px;text-align:center">2_</div>
<div class="t" style="left:96px;top:648px;font-size:13px;line-height:13px;color:#2b2f38;font-weight:normal;transform:scaleX(0.9891);transform-origin:0 0;">_Air_Macau_Limited__12.1-1.1, 2</div>
<svg class="r" style="left:301px;top:645px;" width="18" height="18" viewBox="0 0 18 18"><circle cx="9" cy="9" r="7.6" fill="none" stroke="#1838ac" stroke-width="1.7"/><path d="M9 7.6V13" stroke="#1838ac" stroke-width="2"/><circle cx="9" cy="5.2" r="1.15" fill="#1838ac"/></svg>
<div class="r" style="left:743px;top:636px;width:21px;height:16px;border-radius:2px;background:#f0ad4e;color:#333;font-size:11px;line-height:16px;text-align:center">RS</div>
<div class="t" style="left:769px;top:638px;font-size:13px;line-height:13px;color:#333;font-weight:normal;">已保留</div>
<div class="t" style="left:824px;top:640px;font-size:13px;line-height:13px;color:#3344bb;font-weight:normal;">分配</div>
<div class="t" style="left:824px;top:660px;font-size:12px;line-height:12px;color:#666;font-weight:normal;transform:scaleX(0.8889);transform-origin:0 0;">DOON</div>
<div class="t" style="left:884px;top:639px;font-size:13px;line-height:13px;color:#333;font-weight:normal;transform:scaleX(1.0510);transform-origin:0 0;">2/0</div>
<div class="t" style="left:884px;top:659px;font-size:12px;line-height:12px;color:#666;font-weight:normal;transform:scaleX(0.9239);transform-origin:0 0;">055277</div>
<div class="t" style="left:937px;top:641px;font-size:14px;line-height:14px;color:#2b2f38;font-weight:normal;transform:scaleX(0.9633);transform-origin:0 0;">28/12/2025 14:15</div>
<div class="t" style="left:937px;top:659px;font-size:12px;line-height:12px;color:#555;font-weight:normal;transform:scaleX(0.9513);transform-origin:0 0;">29/12/2025 14:00 (1)</div>
<div class="t" style="left:1064px;top:639px;font-size:13px;line-height:13px;color:#333;font-weight:normal;transform:scaleX(0.9381);transform-origin:0 0;">GCA00</div>
<div class="t" style="left:1064px;top:659px;font-size:12px;line-height:12px;color:#666;font-weight:normal;transform:scaleX(0.8998);transform-origin:0 0;">NON</div>
<div class="t" style="left:1147px;top:639px;font-size:13px;line-height:13px;color:#3344bb;font-weight:normal;transform:scaleX(0.8734);transform-origin:0 0;">XXXXX CNY</div>
<div class="t" style="left:1166px;top:659px;font-size:12px;line-height:12px;color:#555;font-weight:normal;transform:scaleX(0.8841);transform-origin:0 0;">0.00 CNY</div>
<div class="t" style="left:1229px;top:648px;font-size:12px;line-height:12px;color:#555;font-weight:normal;transform:scaleX(0.9423);transform-origin:0 0;">C25|20251201</div>
<svg class="r" style="left:1329px;top:647px;" width="15" height="15" viewBox="0 0 15 15"><path d="M4.3 1.6H13.4V12.2H1.9V4Z" fill="none" stroke="#1838ac" stroke-width="1.9" stroke-linejoin="miter"/><path d="M1.2 4.4L4.6 1V4.4Z" fill="#1838ac"/><path d="M7.2 4.4H11.3M3.9 7.2H11.3M3.9 9.6H10.1" stroke="#1838ac" stroke-width="1.3"/></svg>
<svg class="r" style="left:1378px;top:646.5px;" width="14" height="15" viewBox="0 0 14 15"><path d="M3.8 2.2H1.3V13.4H12V2.2H9.6" fill="none" stroke="#1838ac" stroke-width="1.7"/><rect x="4" y="0.9" width="5.4" height="2.7" fill="none" stroke="#1838ac" stroke-width="1.6"/></svg>
<svg class="r" style="left:1416px;top:639.2px;" width="15" height="11" viewBox="0 0 15 11"><g fill="#1838ac"><circle cx="2.9" cy="3.7" r="1.9"/><path d="M0 9.8C0 7.4 1.1 6.2 3 6.2C3.8 6.2 4.4 6.4 4.9 6.8L4 9.8Z"/><circle cx="12.1" cy="3.7" r="1.9"/><path d="M15 9.8C15 7.4 13.9 6.2 12 6.2C11.2 6.2 10.6 6.4 10.1 6.8L11 9.8Z"/><circle cx="7.5" cy="2.5" r="2.4"/><path d="M3.4 9.8C3.4 6.8 5.1 5.4 7.5 5.4C9.9 5.4 11.6 6.8 11.6 9.8Z"/></g></svg>
<div class="t" style="left:1437px;top:639px;font-size:13px;line-height:13px;color:#2438b0;font-weight:normal;transform:scaleX(1.0380);transform-origin:0 0;">Air Macau Limited</div>
<svg class="r" style="left:1416px;top:657px;" width="15" height="14" viewBox="0 0 15 14"><path d="M5 5.2V0.8H13.6V13" fill="none" stroke="#1838ac" stroke-width="1.6"/><rect x="7.2" y="2.4" width="1.5" height="1.3" fill="#1838ac"/><rect x="10.2" y="2.4" width="1.5" height="1.3" fill="#1838ac"/><rect x="1.9" y="5.8" width="8.4" height="7.2" fill="none" stroke="#1838ac" stroke-width="1.6"/><path d="M6.1 6.6V12.5M2.6 9.4H9.6" stroke="#1838ac" stroke-width="1"/><path d="M0 13.2H15" stroke="#1838ac" stroke-width="1.5"/></svg>
<div class="t" style="left:1435px;top:658px;font-size:13px;line-height:13px;color:#2438b0;font-weight:normal;transform:scaleX(1.0380);transform-origin:0 0;">Air Macau Limited</div>
<div class="r" style="left:1730px;top:647px;width:54px;height:16px;border-radius:2px;background:#f8dba6;color:#333;font-size:11px;line-height:16px;text-align:center">首次入住</div>
<svg class="r" style="left:1812px;top:646px;" width="16" height="16" viewBox="0 0 16 16"><path d="M0.8 2.3H15.6" stroke="#1838ac" stroke-width="2"/><path d="M4.4 2.5V13.8L8.2 11.4L12 13.8V2.5" fill="none" stroke="#1838ac" stroke-width="1.7"/><path d="M6.1 4.7H10.3M6.1 7.2H10.3M6.1 9.4H10.3" stroke="#1838ac" stroke-width="1.1"/></svg>
<div class="r" style="left:1851px;top:647.6px;width:3.2px;height:3.2px;background:#1838ac;border-radius:50%"></div>
<div class="r" style="left:1851px;top:652.3000000000001px;width:3.2px;height:3.2px;background:#1838ac;border-radius:50%"></div>
<div class="r" style="left:1851px;top:657.0px;width:3.2px;height:3.2px;background:#1838ac;border-radius:50%"></div>
<svg class="r" style="left:1878px;top:650px;" width="13" height="8" viewBox="0 0 13 8"><path d="M1.6 1.6L6.3 5.8L11 1.6" fill="none" stroke="#1838ac" stroke-width="2.1"/></svg>
<div class="r" style="left:4px;top:683.5px;width:1912px;height:58.875px;background:#eef5fe;"></div>
<div class="r" style="left:4px;top:742px;width:1912px;height:1px;background:#dde0e6;"></div>
<div class="r" style="left:21px;top:703px;width:15px;height:15px;border:1.5px solid #555;border-radius:2px;background:#fff"></div>
<div class="r" style="left:56px;top:696px;width:30px;height:30px;border-radius:50%;border:1px solid #dcdcdc;background:#f1f1f1;color:#333;font-size:13px;line-height:30px;text-align:center">1_</div>
<div class="t" style="left:96px;top:706px;font-size:13px;line-height:13px;color:#2b2f38;font-weight:normal;transform:scaleX(0.9891);transform-origin:0 0;">_Air_Macau_Limited__12.1-1.1, 1</div>
<svg class="r" style="left:301px;top:703px;" width="18" height="18" viewBox="0 0 18 18"><circle cx="9" cy="9" r="7.6" fill="none" stroke="#1838ac" stroke-width="1.7"/><path d="M9 7.6V13" stroke="#1838ac" stroke-width="2"/><circle cx="9" cy="5.2" r="1.15" fill="#1838ac"/></svg>
<div class="r" style="left:743px;top:694px;width:21px;height:16px;border-radius:2px;background:#f0ad4e;color:#333;font-size:11px;line-height:16px;text-align:center">RS</div>
<div class="t" style="left:769px;top:696px;font-size:13px;line-height:13px;color:#333;font-weight:normal;">已保留</div>
<div class="t" style="left:824px;top:698px;font-size:13px;line-height:13px;color:#3344bb;font-weight:normal;">分配</div>
<div class="t" style="left:824px;top:718px;font-size:12px;line-height:12px;color:#666;font-weight:normal;transform:scaleX(0.8889);transform-origin:0 0;">DOON</div>
<div class="t" style="left:884px;top:697px;font-size:13px;line-height:13px;color:#333;font-weight:normal;transform:scaleX(1.0510);transform-origin:0 0;">2/0</div>
<div class="t" style="left:884px;top:717px;font-size:12px;line-height:12px;color:#666;font-weight:normal;transform:scaleX(0.9239);transform-origin:0 0;">055284</div>
<div class="t" style="left:937px;top:699px;font-size:14px;line-height:14px;color:#2b2f38;font-weight:normal;transform:scaleX(0.9633);transform-origin:0 0;">28/12/2025 14:15</div>
<div class="t" style="left:937px;top:717px;font-size:12px;line-height:12px;color:#555;font-weight:normal;transform:scaleX(0.9513);transform-origin:0 0;">29/12/2025 14:00 (1)</div>
<div class="t" style="left:1064px;top:697px;font-size:13px;line-height:13px;color:#333;font-weight:normal;transform:scaleX(0.9381);transform-origin:0 0;">GCA00</div>
<div class="t" style="left:1064px;top:717px;font-size:12px;line-height:12px;color:#666;font-weight:normal;transform:scaleX(0.8998);transform-origin:0 0;">NON</div>
<div class="t" style="left:1147px;top:697px;font-size:13px;line-height:13px;color:#3344bb;font-weight:normal;transform:scaleX(0.8734);transform-origin:0 0;">XXXXX CNY</div>
<div class="t" style="left:1166px;top:717px;font-size:12px;line-height:12px;color:#555;font-weight:normal;transform:scaleX(0.8841);transform-origin:0 0;">0.00 CNY</div>
<div class="t" style="left:1229px;top:706px;font-size:12px;line-height:12px;color:#555;font-weight:normal;transform:scaleX(0.9423);transform-origin:0 0;">C25|20251201</div>
<svg class="r" style="left:1329px;top:705px;" width="15" height="15" viewBox="0 0 15 15"><path d="M4.3 1.6H13.4V12.2H1.9V4Z" fill="none" stroke="#1838ac" stroke-width="1.9" stroke-linejoin="miter"/><path d="M1.2 4.4L4.6 1V4.4Z" fill="#1838ac"/><path d="M7.2 4.4H11.3M3.9 7.2H11.3M3.9 9.6H10.1" stroke="#1838ac" stroke-width="1.3"/></svg>
<svg class="r" style="left:1378px;top:704.5px;" width="14" height="15" viewBox="0 0 14 15"><path d="M3.8 2.2H1.3V13.4H12V2.2H9.6" fill="none" stroke="#1838ac" stroke-width="1.7"/><rect x="4" y="0.9" width="5.4" height="2.7" fill="none" stroke="#1838ac" stroke-width="1.6"/></svg>
<svg class="r" style="left:1416px;top:697.2px;" width="15" height="11" viewBox="0 0 15 11"><g fill="#1838ac"><circle cx="2.9" cy="3.7" r="1.9"/><path d="M0 9.8C0 7.4 1.1 6.2 3 6.2C3.8 6.2 4.4 6.4 4.9 6.8L4 9.8Z"/><circle cx="12.1" cy="3.7" r="1.9"/><path d="M15 9.8C15 7.4 13.9 6.2 12 6.2C11.2 6.2 10.6 6.4 10.1 6.8L11 9.8Z"/><circle cx="7.5" cy="2.5" r="2.4"/><path d="M3.4 9.8C3.4 6.8 5.1 5.4 7.5 5.4C9.9 5.4 11.6 6.8 11.6 9.8Z"/></g></svg>
<div class="t" style="left:1437px;top:697px;font-size:13px;line-height:13px;color:#2438b0;font-weight:normal;transform:scaleX(1.0380);transform-origin:0 0;">Air Macau Limited</div>
<svg class="r" style="left:1416px;top:715px;" width="15" height="14" viewBox="0 0 15 14"><path d="M5 5.2V0.8H13.6V13" fill="none" stroke="#1838ac" stroke-width="1.6"/><rect x="7.2" y="2.4" width="1.5" height="1.3" fill="#1838ac"/><rect x="10.2" y="2.4" width="1.5" height="1.3" fill="#1838ac"/><rect x="1.9" y="5.8" width="8.4" height="7.2" fill="none" stroke="#1838ac" stroke-width="1.6"/><path d="M6.1 6.6V12.5M2.6 9.4H9.6" stroke="#1838ac" stroke-width="1"/><path d="M0 13.2H15" stroke="#1838ac" stroke-width="1.5"/></svg>
<div class="t" style="left:1435px;top:716px;font-size:13px;line-height:13px;color:#2438b0;font-weight:normal;transform:scaleX(1.0380);transform-origin:0 0;">Air Macau Limited</div>
<div class="r" style="left:1730px;top:705px;width:54px;height:16px;border-radius:2px;background:#f8dba6;color:#333;font-size:11px;line-height:16px;text-align:center">首次入住</div>
<svg class="r" style="left:1812px;top:704px;" width="16" height="16" viewBox="0 0 16 16"><path d="M0.8 2.3H15.6" stroke="#1838ac" stroke-width="2"/><path d="M4.4 2.5V13.8L8.2 11.4L12 13.8V2.5" fill="none" stroke="#1838ac" stroke-width="1.7"/><path d="M6.1 4.7H10.3M6.1 7.2H10.3M6.1 9.4H10.3" stroke="#1838ac" stroke-width="1.1"/></svg>
<div class="r" style="left:1851px;top:705.6px;width:3.2px;height:3.2px;background:#1838ac;border-radius:50%"></div>
<div class="r" style="left:1851px;top:710.3000000000001px;width:3.2px;height:3.2px;background:#1838ac;border-radius:50%"></div>
<div class="r" style="left:1851px;top:715.0px;width:3.2px;height:3.2px;background:#1838ac;border-radius:50%"></div>
<svg class="r" style="left:1878px;top:708px;" width="13" height="8" viewBox="0 0 13 8"><path d="M1.6 1.6L6.3 5.8L11 1.6" fill="none" stroke="#1838ac" stroke-width="2.1"/></svg>
<div class="r" style="left:4px;top:742.375px;width:1912px;height:58.875px;background:#ffffff;"></div>
<div class="r" style="left:21px;top:762px;width:15px;height:15px;border:1.5px solid #555;border-radius:2px;background:#fff"></div>
<div class="r" style="left:56px;top:755px;width:30px;height:30px;border-radius:50%;border:1px solid #dcdcdc;background:#f1f1f1;color:#333;font-size:13px;line-height:30px;text-align:center">XL</div>
<div class="t" style="left:96px;top:765px;font-size:13px;line-height:13px;color:#2b2f38;font-weight:normal;transform:scaleX(0.9526);transform-origin:0 0;">LI, XINRAN</div>
<svg class="r" style="left:171px;top:762px;" width="18" height="18" viewBox="0 0 18 18"><circle cx="9" cy="9" r="7.6" fill="none" stroke="#1838ac" stroke-width="1.7"/><path d="M9 7.6V13" stroke="#1838ac" stroke-width="2"/><circle cx="9" cy="5.2" r="1.15" fill="#1838ac"/></svg>
<div class="r" style="left:683px;top:773px;width:22px;height:16px;border-radius:2px;background:#e0e3e8;color:#333;font-size:11px;line-height:16px;text-align:center">PC</div>
<div class="r" style="left:743px;top:753px;width:21px;height:16px;border-radius:2px;background:#f0ad4e;color:#333;font-size:11px;line-height:16px;text-align:center">RS</div>
<div class="t" style="left:769px;top:755px;font-size:13px;line-height:13px;color:#333;font-weight:normal;">已保留</div>
<div class="t" style="left:824px;top:757px;font-size:13px;line-height:13px;color:#3344bb;font-weight:normal;">分配</div>
<div class="t" style="left:824px;top:777px;font-size:12px;line-height:12px;color:#666;font-weight:normal;transform:scaleX(0.8889);transform-origin:0 0;">DOON</div>
<div class="t" style="left:884px;top:756px;font-size:13px;line-height:13px;color:#333;font-weight:normal;transform:scaleX(1.0510);transform-origin:0 0;">1/0</div>
<div class="t" style="left:884px;top:776px;font-size:12px;line-height:12px;color:#666;font-weight:normal;transform:scaleX(0.9239);transform-origin:0 0;">054261</div>
<div class="t" style="left:937px;top:758px;font-size:14px;line-height:14px;color:#2b2f38;font-weight:normal;transform:scaleX(0.9633);transform-origin:0 0;">28/12/2025 14:15</div>
<div class="t" style="left:937px;top:776px;font-size:12px;line-height:12px;color:#555;font-weight:normal;transform:scaleX(0.9513);transform-origin:0 0;">29/12/2025 14:00 (1)</div>
<div class="t" style="left:1064px;top:756px;font-size:13px;line-height:13px;color:#333;font-weight:normal;transform:scaleX(0.9310);transform-origin:0 0;">IDMCS</div>
<div class="t" style="left:1064px;top:776px;font-size:12px;line-height:12px;color:#666;font-weight:normal;transform:scaleX(0.8397);transform-origin:0 0;">DP</div>
<div class="t" style="left:1143px;top:756px;font-size:13px;line-height:13px;color:#333;font-weight:normal;transform:scaleX(0.9742);transform-origin:0 0;">314.27 CNY</div>
<div class="t" style="left:1166px;top:776px;font-size:12px;line-height:12px;color:#555;font-weight:normal;transform:scaleX(0.8841);transform-origin:0 0;">0.00 CNY</div>
<svg class="r" style="left:1329px;top:764px;" width="15" height="15" viewBox="0 0 15 15"><path d="M4.3 1.6H13.4V12.2H1.9V4Z" fill="none" stroke="#1838ac" stroke-width="1.9" stroke-linejoin="miter"/><path d="M1.2 4.4L4.6 1V4.4Z" fill="#1838ac"/><path d="M7.2 4.4H11.3M3.9 7.2H11.3M3.9 9.6H10.1" stroke="#1838ac" stroke-width="1.3"/></svg>
<svg class="r" style="left:1378px;top:763.5px;" width="14" height="15" viewBox="0 0 14 15"><path d="M3.8 2.2H1.3V13.4H12V2.2H9.6" fill="none" stroke="#1838ac" stroke-width="1.7"/><rect x="4" y="0.9" width="5.4" height="2.7" fill="none" stroke="#1838ac" stroke-width="1.6"/></svg>
<div class="r" style="left:1338px;top:755px;width:14px;height:14px;border-radius:50%;background:#d8232a;color:#fff;font-size:10px;line-height:14px;text-align:center;font-weight:bold">2</div>
<svg class="r" style="left:1416px;top:765px;" width="15" height="14" viewBox="0 0 15 14"><path d="M5 5.2V0.8H13.6V13" fill="none" stroke="#1838ac" stroke-width="1.6"/><rect x="7.2" y="2.4" width="1.5" height="1.3" fill="#1838ac"/><rect x="10.2" y="2.4" width="1.5" height="1.3" fill="#1838ac"/><rect x="1.9" y="5.8" width="8.4" height="7.2" fill="none" stroke="#1838ac" stroke-width="1.6"/><path d="M6.1 6.6V12.5M2.6 9.4H9.6" stroke="#1838ac" stroke-width="1"/><path d="M0 13.2H15" stroke="#1838ac" stroke-width="1.5"/></svg>
<div class="t" style="left:1435px;top:765px;font-size:13px;line-height:13px;color:#2438b0;font-weight:normal;transform:scaleX(0.9558);transform-origin:0 0;">ALFA LAVAL</div>
<div class="r" style="left:1730px;top:764px;width:54px;height:16px;border-radius:2px;background:#f8dba6;color:#333;font-size:11px;line-height:16px;text-align:center">首次入住</div>
<svg class="r" style="left:1812px;top:763px;" width="16" height="16" viewBox="0 0 16 16"><path d="M0.8 2.3H15.6" stroke="#1838ac" stroke-width="2"/><path d="M4.4 2.5V13.8L8.2 11.4L12 13.8V2.5" fill="none" stroke="#1838ac" stroke-width="1.7"/><path d="M6.1 4.7H10.3M6.1 7.2H10.3M6.1 9.4H10.3" stroke="#1838ac" stroke-width="1.1"/></svg>
<div class="r" style="left:1851px;top:764.6px;width:3.2px;height:3.2px;background:#1838ac;border-radius:50%"></div>
<div class="r" style="left:1851px;top:769.3000000000001px;width:3.2px;height:3.2px;background:#1838ac;border-radius:50%"></div>
<div class="r" style="left:1851px;top:774.0px;width:3.2px;height:3.2px;background:#1838ac;border-radius:50%"></div>
<svg class="r" style="left:1878px;top:767px;" width="13" height="8" viewBox="0 0 13 8"><path d="M1.6 1.6L6.3 5.8L11 1.6" fill="none" stroke="#1838ac" stroke-width="2.1"/></svg>
<div class="r" style="left:4px;top:801.25px;width:1912px;height:58.875px;background:#f2f3f5;"></div>
<div class="r" style="left:21px;top:821px;width:15px;height:15px;border:1.5px solid #555;border-radius:2px;background:#fff"></div>
<div class="r" style="left:56px;top:814px;width:30px;height:30px;border-radius:50%;border:1px solid #dcdcdc;background:#f1f1f1;color:#333;font-size:13px;line-height:30px;text-align:center">XZ</div>
<div class="t" style="left:96px;top:824px;font-size:13px;line-height:13px;color:#2b2f38;font-weight:normal;transform:scaleX(0.9677);transform-origin:0 0;">ZHANG, XIN</div>
<svg class="r" style="left:179px;top:821px;" width="18" height="18" viewBox="0 0 18 18"><circle cx="9" cy="9" r="7.6" fill="none" stroke="#1838ac" stroke-width="1.7"/><path d="M9 7.6V13" stroke="#1838ac" stroke-width="2"/><circle cx="9" cy="5.2" r="1.15" fill="#1838ac"/></svg>
<div class="r" style="left:683px;top:832px;width:22px;height:16px;border-radius:2px;background:#6e7378;color:#333;font-size:11px;line-height:16px;text-align:center">PC</div>
<div class="r" style="left:743px;top:812px;width:21px;height:16px;border-radius:2px;background:#f0ad4e;color:#333;font-size:11px;line-height:16px;text-align:center">RS</div>
<div class="t" style="left:769px;top:814px;font-size:13px;line-height:13px;color:#333;font-weight:normal;">已保留</div>
<div class="t" style="left:824px;top:816px;font-size:13px;line-height:13px;color:#3344bb;font-weight:normal;">分配</div>
<div class="t" style="left:824px;top:836px;font-size:12px;line-height:12px;color:#666;font-weight:normal;transform:scaleX(0.8889);transform-origin:0 0;">DOON</div>
<div class="t" style="left:884px;top:815px;font-size:13px;line-height:13px;color:#333;font-weight:normal;transform:scaleX(1.0510);transform-origin:0 0;">1/1</div>
<div class="t" style="left:884px;top:835px;font-size:12px;line-height:12px;color:#666;font-weight:normal;transform:scaleX(0.9239);transform-origin:0 0;">056815</div>
<div class="t" style="left:937px;top:817px;font-size:14px;line-height:14px;color:#2b2f38;font-weight:normal;transform:scaleX(0.9633);transform-origin:0 0;">28/12/2025 14:15</div>
<div class="t" style="left:937px;top:835px;font-size:12px;line-height:12px;color:#555;font-weight:normal;transform:scaleX(0.9513);transform-origin:0 0;">29/12/2025 14:00 (1)</div>
<div class="t" style="left:1064px;top:815px;font-size:13px;line-height:13px;color:#333;font-weight:normal;transform:scaleX(0.8832);transform-origin:0 0;">IJSTL</div>
<div class="t" style="left:1064px;top:835px;font-size:12px;line-height:12px;color:#666;font-weight:normal;transform:scaleX(0.8072);transform-origin:0 0;">CC</div>
<div class="t" style="left:1143px;top:815px;font-size:13px;line-height:13px;color:#333;font-weight:normal;transform:scaleX(0.9742);transform-origin:0 0;">271.00 CNY</div>
<div class="t" style="left:1166px;top:835px;font-size:12px;line-height:12px;color:#555;font-weight:normal;transform:scaleX(0.8841);transform-origin:0 0;">0.00 CNY</div>
<div class="t" style="left:1229px;top:823px;font-size:14px;line-height:14px;color:#333;font-weight:normal;transform:scaleX(0.9453);transform-origin:0 0;">CreditCard</div>
<svg class="r" style="left:1329px;top:823px;" width="15" height="15" viewBox="0 0 15 15"><path d="M4.3 1.6H13.4V12.2H1.9V4Z" fill="none" stroke="#1838ac" stroke-width="1.9" stroke-linejoin="miter"/><path d="M1.2 4.4L4.6 1V4.4Z" fill="#1838ac"/><path d="M7.2 4.4H11.3M3.9 7.2H11.3M3.9 9.6H10.1" stroke="#1838ac" stroke-width="1.3"/></svg>
<svg class="r" style="left:1378px;top:822.5px;" width="14" height="15" viewBox="0 0 14 15"><path d="M3.8 2.2H1.3V13.4H12V2.2H9.6" fill="none" stroke="#1838ac" stroke-width="1.7"/><rect x="4" y="0.9" width="5.4" height="2.7" fill="none" stroke="#1838ac" stroke-width="1.6"/></svg>
<div class="r" style="left:1386px;top:814px;width:14px;height:14px;border-radius:50%;background:#e6e7ea;color:#333;font-size:10px;line-height:14px;text-align:center">1</div>
<div class="r" style="left:1730px;top:823px;width:54px;height:16px;border-radius:2px;background:#f8dba6;color:#333;font-size:11px;line-height:16px;text-align:center">首次入住</div>
<svg class="r" style="left:1812px;top:822px;" width="16" height="16" viewBox="0 0 16 16"><path d="M0.8 2.3H15.6" stroke="#1838ac" stroke-width="2"/><path d="M4.4 2.5V13.8L8.2 11.4L12 13.8V2.5" fill="none" stroke="#1838ac" stroke-width="1.7"/><path d="M6.1 4.7H10.3M6.1 7.2H10.3M6.1 9.4H10.3" stroke="#1838ac" stroke-width="1.1"/></svg>
<div class="r" style="left:1851px;top:823.6px;width:3.2px;height:3.2px;background:#1838ac;border-radius:50%"></div>
<div class="r" style="left:1851px;top:828.3000000000001px;width:3.2px;height:3.2px;background:#1838ac;border-radius:50%"></div>
<div class="r" style="left:1851px;top:833.0px;width:3.2px;height:3.2px;background:#1838ac;border-radius:50%"></div>
<svg class="r" style="left:1878px;top:826px;" width="13" height="8" viewBox="0 0 13 8"><path d="M1.6 1.6L6.3 5.8L11 1.6" fill="none" stroke="#1838ac" stroke-width="2.1"/></svg>
<div class="r" style="left:4px;top:860.125px;width:1912px;height:58.875px;background:#ffffff;"></div>
<div class="r" style="left:21px;top:880px;width:15px;height:15px;border:1.5px solid #555;border-radius:2px;background:#fff"></div>
<div class="r" style="left:56px;top:873px;width:30px;height:30px;border-radius:50%;border:1px solid #dcdcdc;background:#f1f1f1;color:#333;font-size:13px;line-height:30px;text-align:center">XZ</div>
<div class="t" style="left:96px;top:883px;font-size:13px;line-height:13px;color:#2b2f38;font-weight:normal;transform:scaleX(0.9677);transform-origin:0 0;">ZHANG, XIN</div>
<svg class="r" style="left:179px;top:880px;" width="18" height="18" viewBox="0 0 18 18"><circle cx="9" cy="9" r="7.6" fill="none" stroke="#1838ac" stroke-width="1.7"/><path d="M9 7.6V13" stroke="#1838ac" stroke-width="2"/><circle cx="9" cy="5.2" r="1.15" fill="#1838ac"/></svg>
<div class="r" style="left:683px;top:891px;width:22px;height:16px;border-radius:2px;background:#6e7378;color:#333;font-size:11px;line-height:16px;text-align:center">PC</div>
<div class="r" style="left:743px;top:871px;width:21px;height:16px;border-radius:2px;background:#f0ad4e;color:#333;font-size:11px;line-height:16px;text-align:center">RS</div>
<div class="t" style="left:769px;top:873px;font-size:13px;line-height:13px;color:#333;font-weight:normal;">已保留</div>
<div class="t" style="left:824px;top:875px;font-size:13px;line-height:13px;color:#3344bb;font-weight:normal;">分配</div>
<div class="t" style="left:824px;top:895px;font-size:12px;line-height:12px;color:#666;font-weight:normal;transform:scaleX(0.8889);transform-origin:0 0;">DOON</div>
<div class="t" style="left:884px;top:874px;font-size:13px;line-height:13px;color:#333;font-weight:normal;transform:scaleX(1.0510);transform-origin:0 0;">1/1</div>
<div class="t" style="left:884px;top:894px;font-size:12px;line-height:12px;color:#666;font-weight:normal;transform:scaleX(0.9239);transform-origin:0 0;">056812</div>
<div class="t" style="left:937px;top:876px;font-size:14px;line-height:14px;color:#2b2f38;font-weight:normal;transform:scaleX(0.9633);transform-origin:0 0;">28/12/2025 14:15</div>
<div class="t" style="left:937px;top:894px;font-size:12px;line-height:12px;color:#555;font-weight:normal;transform:scaleX(0.9513);transform-origin:0 0;">29/12/2025 14:00 (1)</div>
<div class="t" style="left:1064px;top:874px;font-size:13px;line-height:13px;color:#333;font-weight:normal;transform:scaleX(0.9697);transform-origin:0 0;">IVANI</div>
<div class="t" style="left:1064px;top:894px;font-size:12px;line-height:12px;color:#666;font-weight:normal;transform:scaleX(0.8072);transform-origin:0 0;">CC</div>
<div class="t" style="left:1147px;top:874px;font-size:13px;line-height:13px;color:#3344bb;font-weight:normal;transform:scaleX(0.8734);transform-origin:0 0;">XXXXX CNY</div>
<div class="t" style="left:1166px;top:894px;font-size:12px;line-height:12px;color:#555;font-weight:normal;transform:scaleX(0.8841);transform-origin:0 0;">0.00 CNY</div>
<div class="t" style="left:1229px;top:882px;font-size:14px;line-height:14px;color:#333;font-weight:normal;transform:scaleX(0.9453);transform-origin:0 0;">CreditCard</div>
<svg class="r" style="left:1329px;top:882px;" width="15" height="15" viewBox="0 0 15 15"><path d="M4.3 1.6H13.4V12.2H1.9V4Z" fill="none" stroke="#1838ac" stroke-width="1.9" stroke-linejoin="miter"/><path d="M1.2 4.4L4.6 1V4.4Z" fill="#1838ac"/><path d="M7.2 4.4H11.3M3.9 7.2H11.3M3.9 9.6H10.1" stroke="#1838ac" stroke-width="1.3"/></svg>
<svg class="r" style="left:1378px;top:881.5px;" width="14" height="15" viewBox="0 0 14 15"><path d="M3.8 2.2H1.3V13.4H12V2.2H9.6" fill="none" stroke="#1838ac" stroke-width="1.7"/><rect x="4" y="0.9" width="5.4" height="2.7" fill="none" stroke="#1838ac" stroke-width="1.6"/></svg>
<div class="r" style="left:1338px;top:873px;width:14px;height:14px;border-radius:50%;background:#d8232a;color:#fff;font-size:10px;line-height:14px;text-align:center;font-weight:bold">1</div>
<div class="r" style="left:1730px;top:882px;width:54px;height:16px;border-radius:2px;background:#f8dba6;color:#333;font-size:11px;line-height:16px;text-align:center">首次入住</div>
<svg class="r" style="left:1812px;top:881px;" width="16" height="16" viewBox="0 0 16 16"><path d="M0.8 2.3H15.6" stroke="#1838ac" stroke-width="2"/><path d="M4.4 2.5V13.8L8.2 11.4L12 13.8V2.5" fill="none" stroke="#1838ac" stroke-width="1.7"/><path d="M6.1 4.7H10.3M6.1 7.2H10.3M6.1 9.4H10.3" stroke="#1838ac" stroke-width="1.1"/></svg>
<div class="r" style="left:1851px;top:882.6px;width:3.2px;height:3.2px;background:#1838ac;border-radius:50%"></div>
<div class="r" style="left:1851px;top:887.3000000000001px;width:3.2px;height:3.2px;background:#1838ac;border-radius:50%"></div>
<div class="r" style="left:1851px;top:892.0px;width:3.2px;height:3.2px;background:#1838ac;border-radius:50%"></div>
<svg class="r" style="left:1878px;top:885px;" width="13" height="8" viewBox="0 0 13 8"><path d="M1.6 1.6L6.3 5.8L11 1.6" fill="none" stroke="#1838ac" stroke-width="2.1"/></svg>
<div class="r" style="left:4px;top:919px;width:1912px;height:1px;background:#dde0e6;"></div>
<div class="r" style="left:4px;top:980px;width:1912px;height:1px;background:#dde0e6;"></div>
<div class="t" style="left:1760px;top:998px;font-size:13px;line-height:13px;color:#333;font-weight:normal;transform:scaleX(0.9771);transform-origin:0 0;">8 项目</div>
<div class="r" style="left:1813px;top:989px;width:1px;height:31px;background:#dde0e6;"></div>
<div class="t" style="left:1830px;top:998px;font-size:13px;line-height:13px;color:#333;font-weight:normal;transform:scaleX(0.9982);transform-origin:0 0;">50 每页</div>
<svg class="r" style="left:1881px;top:1003px;" width="9" height="5" viewBox="0 0 9 5"><path d="M0 0H9L4.5 5Z" fill="#1838ac"/></svg>
<div class="r" style="left:0px;top:1032px;width:1920px;height:48px;background:#c8eede;"></div>
<div class="r" style="left:0px;top:1032px;width:1920px;height:1px;background:#a9c2b6;"></div>
<svg class="r" style="left:18px;top:1045px;" width="26" height="17" viewBox="0 0 26 17"><defs><linearGradient id="cg" x1="0" y1="0" x2="0" y2="1"><stop offset="0" stop-color="#a8c4f4"/><stop offset="1" stop-color="#dfe8fa"/></linearGradient></defs><path d="M5 16A4.5 4.5 0 0 1 4.5 7.5A7 7 0 0 1 17 5A5.5 5.5 0 0 1 21.5 16Z" fill="url(#cg)" stroke="#8fb0f0" stroke-width="1"/></svg>
<div class="t" style="left:50px;top:1042px;font-size:11px;line-height:11px;color:#222;font-weight:normal;transform:scaleX(0.9765);transform-origin:0 0;">12°C</div>
<div class="t" style="left:50px;top:1057px;font-size:12px;line-height:12px;color:#222;font-weight:normal;">阴</div>
<svg class="r" style="left:639px;top:1045px;" width="23" height="23" viewBox="0 0 23 23"><defs><linearGradient id="wg" x1="0" y1="0" x2="1" y2="1"><stop offset="0" stop-color="#3ec3f7"/><stop offset="1" stop-color="#0a68d8"/></linearGradient></defs><g fill="url(#wg)"><rect x="0" y="0" width="11" height="11" rx="1"/><rect x="12" y="0" width="11" height="11" rx="1"/><rect x="0" y="12" width="11" height="11" rx="1"/><rect x="12" y="12" width="11" height="11" rx="1"/></g></svg>
<div class="r" style="left:675px;top:1040px;width:218px;height:30px;border-radius:16px;background:#eaf6f0;border:1px solid #cfe3d8"></div>
<svg class="r" style="left:686px;top:1048px;" width="16" height="16" viewBox="0 0 16 16"><circle cx="6.5" cy="6.5" r="5" fill="none" stroke="#222" stroke-width="1.7"/><path d="M10 10L14.5 14.5" stroke="#222" stroke-width="1.8"/></svg>
<div class="t" style="left:711px;top:1049px;font-size:14px;line-height:14px;color:#333;font-weight:normal;">搜索</div>
<svg class="r" style="left:842px;top:1045px;" width="24" height="24" viewBox="0 0 24 24"><ellipse cx="11" cy="10" rx="9" ry="7" transform="rotate(-35 11 10)" fill="#e8b878"/><ellipse cx="12" cy="9" rx="5" ry="4" transform="rotate(-35 12 9)" fill="#f3d09a"/><path d="M4 8Q9 12 16 4" fill="none" stroke="#e0507a" stroke-width="2"/><path d="M9 13L14 21M12 12L18 19" stroke="#e0507a" stroke-width="1.6"/></svg>
<svg class="r" style="left:866px;top:1046px;" width="24" height="22" viewBox="0 0 24 22"><ellipse cx="12" cy="17" rx="11" ry="4" fill="#7a62c0"/><path d="M5 4Q12 1 19 4L18 16Q12 19 6 16Z" fill="#6a52b0"/><path d="M5.5 12Q12 15 18.5 12L18.3 14Q12 17 5.7 14Z" fill="#c8b8f0"/></svg>
<div class="r" style="left:913px;top:1045px;width:18px;height:16px;background:linear-gradient(135deg,#ffffff,#d8d8d8);border-radius:1px"></div>
<div class="r" style="left:907px;top:1051px;width:18px;height:16px;background:linear-gradient(180deg,#3a3a3a,#111);border-radius:1px"></div>
<div class="r" style="left:913px;top:1051px;width:12px;height:10px;background:linear-gradient(135deg,#d0d0d0,#8a8a8a)"></div>
<svg class="r" style="left:951px;top:1045px;" width="24" height="21" viewBox="0 0 24 21"><path d="M0 2Q0 0 2 0H8L10 2.5H22Q24 2.5 24 4.5V19Q24 21 22 21H2Q0 21 0 19Z" fill="#e9b430"/><path d="M0 5H24V19Q24 21 22 21H2Q0 21 0 19Z" fill="#f7cf52"/><rect x="4.5" y="15" width="15" height="6" rx="2" fill="#1a78d0"/></svg>
<div class="r" style="left:988px;top:1036px;width:38px;height:40px;background:rgba(255,255,255,0.45);border-radius:4px"></div>
<svg class="r" style="left:995px;top:1044px;" width="24" height="24" viewBox="0 0 24 24"><defs><linearGradient id="eg1" x1="0" y1="1" x2="1" y2="0"><stop offset="0" stop-color="#0c59a4"/><stop offset="0.6" stop-color="#1d8fe0"/><stop offset="1" stop-color="#52d07a"/></linearGradient></defs><circle cx="12" cy="12" r="12" fill="url(#eg1)"/><path d="M6 13Q7 7 13.5 7.5Q19 8 18.5 12.5Q14 11 10.5 12.5Q8 14 10 18Q11.5 20.5 16 20.5Q19 20 22 18Q19 23.5 12 23.5Q5.5 23 6 13Z" fill="#c8eede"/><path d="M10.5 12.5Q14 11 18.5 12.5Q18 15 14 15Q11 15 10.5 12.5Z" fill="#45b8e8"/></svg>
<div class="r" style="left:1000px;top:1073px;width:14px;height:3px;background:#0f6cbd;border-radius:2px"></div>
<svg class="r" style="left:1039px;top:1044px;" width="23" height="24" viewBox="0 0 23 24"><path d="M7 6V3Q7 1 9 1H14Q16 1 16 3V6" fill="none" stroke="#2aa0e8" stroke-width="1.6"/><rect x="0" y="5" width="23" height="19" rx="3" fill="#1a4f9c"/><rect x="6.5" y="9.5" width="4.6" height="4.6" fill="#f25022"/><rect x="12" y="9.5" width="4.6" height="4.6" fill="#7fba00"/><rect x="6.5" y="15" width="4.6" height="4.6" fill="#00a4ef"/><rect x="12" y="15" width="4.6" height="4.6" fill="#ffb900"/></svg>
<svg class="r" style="left:1085px;top:1044px;" width="19" height="24" viewBox="0 0 19 24"><rect x="0" y="0" width="19" height="24" rx="2" fill="#5f6874"/><rect x="2" y="2" width="15" height="4.5" fill="#62d4f4"/><g fill="#dfe3e8"><rect x="2" y="8.5" width="4" height="3.5"/><rect x="7.5" y="8.5" width="4" height="3.5"/><rect x="13" y="8.5" width="4" height="3.5"/><rect x="2" y="13.5" width="4" height="3.5"/><rect x="7.5" y="13.5" width="4" height="3.5"/><rect x="2" y="18.5" width="4" height="3.5"/><rect x="7.5" y="18.5" width="4" height="3.5"/></g><rect x="13" y="13.5" width="4" height="8.5" fill="#1a4a8a"/></svg>
<div class="r" style="left:1120px;top:1036px;width:39px;height:40px;background:#e9aeae;border-radius:4px"></div>
<svg class="r" style="left:1126px;top:1045px;" width="28" height="24" viewBox="0 0 28 24"><ellipse cx="10" cy="8.5" rx="9.5" ry="8" fill="#3dc850"/><path d="M3 14L2 19L7 15.5Z" fill="#3dc850"/><circle cx="7" cy="7" r="1.2" fill="#1d6a28"/><circle cx="13" cy="7" r="1.2" fill="#1d6a28"/><ellipse cx="19" cy="15" rx="8.5" ry="7" fill="#eeeeee"/><circle cx="16.5" cy="14" r="1" fill="#888"/><circle cx="21.5" cy="14" r="1" fill="#888"/></svg>
<div class="r" style="left:1123px;top:1073px;width:32px;height:3px;background:#c8201c;border-radius:2px"></div>
<div class="r" style="left:1171px;top:1044px;width:24px;height:24px;border-radius:50%;background:conic-gradient(from -30deg,#ea4335 0 120deg,#fbbc05 120deg 240deg,#34a853 240deg 360deg)"></div>
<div class="r" style="left:1177px;top:1050px;width:12px;height:12px;border-radius:50%;background:#4285f4;border:2px solid #fff;box-sizing:border-box"></div>
<div class="r" style="left:1215px;top:1044px;width:24px;height:24px;background:#2a5be0;border-radius:3px"></div>
<svg class="r" style="left:1219px;top:1047px;" width="16" height="18" viewBox="0 0 16 18"><path d="M2 1L8 8L14 1M8 8V17M3 9H13M3 12.5H13" fill="none" stroke="#fff" stroke-width="2"/></svg>
<svg class="r" style="left:1259px;top:1044px;" width="24" height="24" viewBox="0 0 24 24"><rect x="9" y="3" width="14" height="18" fill="#fff" stroke="#1d6f42" stroke-width="1"/><path d="M13 3V21M18 3V21M9 7.5H23M9 12H23M9 16.5H23" stroke="#1d6f42" stroke-width="0.7"/><path d="M0 3L13 0V24L0 21Z" fill="#1d6f42"/><path d="M3.5 7.5L9 16.5M9 7.5L3.5 16.5" stroke="#fff" stroke-width="1.8"/></svg>
<div class="r" style="left:959px;top:1073px;width:6px;height:3px;background:#666;border-radius:2px"></div>
<div class="r" style="left:1091px;top:1073px;width:6px;height:3px;background:#666;border-radius:2px"></div>
<div class="r" style="left:1179px;top:1073px;width:6px;height:3px;background:#666;border-radius:2px"></div>
<div class="r" style="left:1223px;top:1073px;width:6px;height:3px;background:#666;border-radius:2px"></div>
<div class="r" style="left:1267px;top:1073px;width:6px;height:3px;background:#666;border-radius:2px"></div>
<svg class="r" style="left:1644px;top:1050px;" width="13" height="8" viewBox="0 0 13 8"><path d="M1 7L6.5 1.5L12 7" fill="none" stroke="#222" stroke-width="1.3"/></svg>
<svg class="r" style="left:1674px;top:1047px;" width="18" height="18" viewBox="0 0 18 18"><path d="M3 9A6 6 0 0 1 14 5.5M15 9A6 6 0 0 1 4 12.5" fill="none" stroke="#222" stroke-width="1.3"/><path d="M12 2V6H16" fill="none" stroke="#222" stroke-width="1.3"/></svg>
<div class="r" style="left:1683px;top:1056px;width:8px;height:8px;background:#1a6fe0;border-radius:50%"></div>
<div class="t" style="left:1707px;top:1049px;font-size:14px;line-height:14px;color:#222;font-weight:normal;">中</div>
<div class="t" style="left:1745px;top:1049px;font-size:14px;line-height:14px;color:#222;font-weight:normal;">拼</div>
<svg class="r" style="left:1781px;top:1047px;" width="18" height="17" viewBox="0 0 18 17"><rect x="1" y="1" width="12" height="10" fill="none" stroke="#222" stroke-width="1.2"/><path d="M7 11V14M3 14.5H11" stroke="#222" stroke-width="1.2"/><rect x="13" y="1" width="3.5" height="6" rx="1.5" fill="none" stroke="#222" stroke-width="1.1"/><path d="M14.7 7V15" stroke="#222" stroke-width="1.1"/></svg>
<svg class="r" style="left:1806px;top:1048px;" width="18" height="15" viewBox="0 0 18 15"><path d="M1 5H4L8 1.5V13.5L4 10H1Z" fill="none" stroke="#222" stroke-width="1.2"/><path d="M11 5A3 3 0 0 1 11 10M13.5 3A6 6 0 0 1 13.5 12M16 1A9 9 0 0 1 16 14" fill="none" stroke="#222" stroke-width="1.2"/></svg>
<div class="t" style="left:1800px;width:101px;text-align:right;top:1043px;font-size:12px;line-height:12px;color:#222">13:46</div>
<div class="t" style="left:1800px;width:101px;text-align:right;top:1059px;font-size:12px;line-height:12px;color:#222">2025/12/16</div>
</body></html>
